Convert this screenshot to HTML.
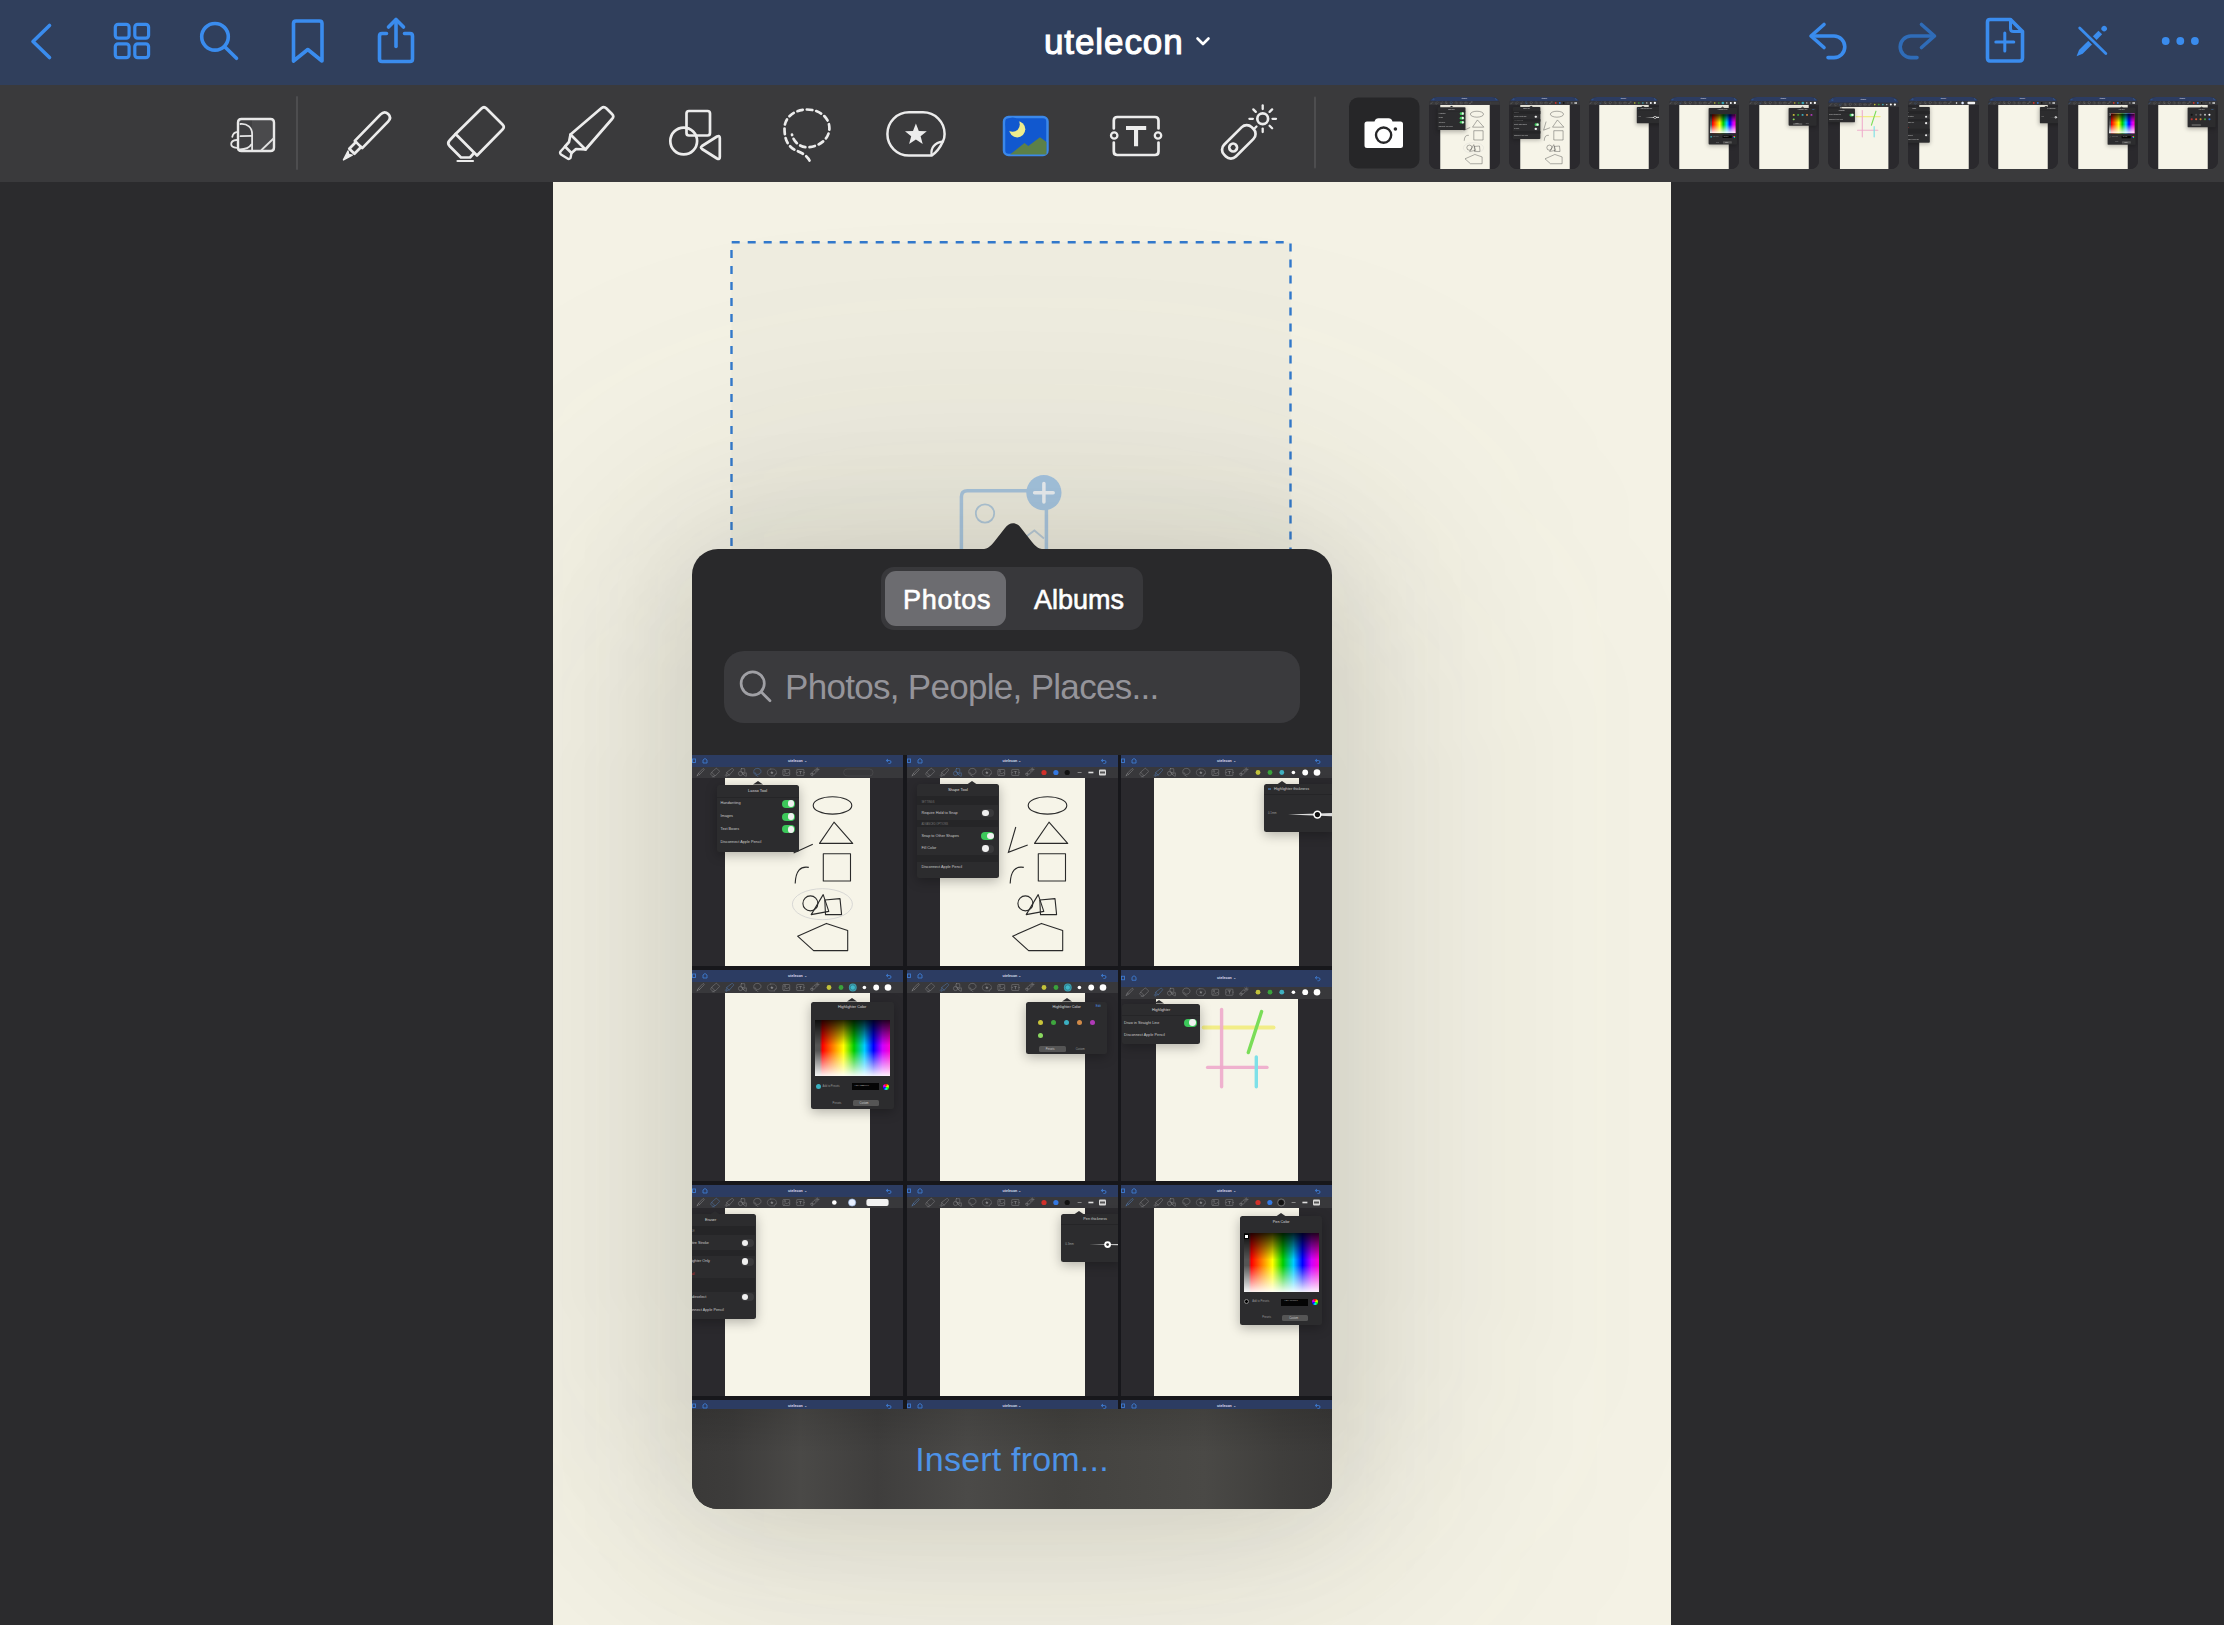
<!DOCTYPE html><html><head><meta charset="utf-8"><style>
*{box-sizing:border-box;margin:0;padding:0}
html,body{width:2224px;height:1625px;overflow:hidden;background:#2b2b2d;font-family:"Liberation Sans",sans-serif}
.a{position:absolute}
svg{position:absolute;overflow:visible}
#nav{left:0;top:0;width:2224px;height:85px;background:#303f5c}
#tb{left:0;top:85px;width:2224px;height:97px;background:#3a3a3c}
#paper{left:553px;top:182px;width:1118px;height:1443px;background:#f4f2e5;overflow:hidden}
#title{left:1044px;top:22px;font-size:35px;font-weight:normal;-webkit-text-stroke:1.1px #fff;color:#fff;letter-spacing:0.9px;line-height:40px}
#pop{left:692px;top:549px;width:640px;height:960px;background:#29292b;border-radius:26px;overflow:hidden}
#popsh{left:127px;top:368px;width:664px;height:970px;border-radius:60px;background:rgba(60,60,45,0.12);filter:blur(60px)}
#popsh2{left:37px;top:288px;width:844px;height:1120px;border-radius:200px;background:rgba(60,60,45,0.10);filter:blur(130px)}
#seg{left:189px;top:18px;width:262px;height:63px;background:#38383b;border-radius:13px}
#segsel{left:4px;top:4px;width:121px;height:55px;background:#6c6c70;border-radius:11px}
.segt{font-size:27px;font-weight:normal;-webkit-text-stroke:0.6px #fff;color:#fff;top:2px;line-height:63px}
#search{left:32px;top:102px;width:576px;height:72px;background:#3a3a3d;border-radius:20px}
#ph{left:61px;top:0;line-height:72px;font-size:35px;letter-spacing:-0.7px;color:#95949a}
#foot{left:0;top:860px;width:640px;height:100px;background:linear-gradient(to bottom,rgba(0,0,0,0.12),rgba(0,0,0,0) 45%),linear-gradient(to right,#3a3938 0%,#3d3c3b 6%,#4a4947 17%,#3f3e3d 29%,#4b4a48 43%,#43423f 58%,#4a4946 80%,#3f3e3c 92%,#3a3938 100%)}
#ins{left:0;width:640px;text-align:center;top:0;line-height:100px;font-size:34px;letter-spacing:0.2px;color:#4d93e8}
.th{overflow:hidden;position:absolute}
.tt{font-size:3.6px;font-weight:bold;color:#dde;white-space:nowrap;line-height:5px}
.tx{white-space:nowrap;line-height:1.2}
.pp{border-radius:2.5px;box-shadow:0 3px 12px rgba(0,0,0,0.28)}
</style></head><body><div id="nav" class="a"><div id="title" class="a">utelecon</div></div><svg class="a" width="2224" height="85" style="left:0;top:0" fill="none" stroke="#3a8cee" stroke-width="3.6" stroke-linecap="round" stroke-linejoin="round"><path d="M49.5,25.5 L33,41.5 L49.5,57.5"/><rect x="115.3" y="24.3" width="13.8" height="13.8" rx="2.8" stroke-width="3.2"/><rect x="134.8" y="24.3" width="13.8" height="13.8" rx="2.8" stroke-width="3.2"/><rect x="115.3" y="43.8" width="13.8" height="13.8" rx="2.8" stroke-width="3.2"/><rect x="134.8" y="43.8" width="13.8" height="13.8" rx="2.8" stroke-width="3.2"/><circle cx="215" cy="36.8" r="13.3"/><path d="M225,47 L236.5,58.3"/><path d="M296,21 L319.5,21 Q322,21 322,23.5 L322,61 L307.8,49.5 L293.5,61 L293.5,23.5 Q293.5,21 296,21 Z"/><path d="M386.5,33.5 L382,33.5 Q379.5,33.5 379.5,36 L379.5,59 Q379.5,61.5 382,61.5 L410,61.5 Q412.5,61.5 412.5,59 L412.5,36 Q412.5,33.5 410,33.5 L404.5,33.5"/><path d="M396,46.5 L396,20"/><path d="M388.5,27 L396,19.5 L403.5,27"/><path d="M1197.5,38.5 L1203,44 L1208.5,38.5" stroke="#fff" stroke-width="2.6"/><path d="M1824,24.5 L1811,36 L1824,47.5"/><path d="M1812,36 L1834,36 A10.8,10.8 0 0 1 1834,57.6 L1828,57.6"/><g stroke="#2f6cb8"><path d="M1921.5,24.5 L1934.5,36 L1921.5,47.5"/><path d="M1933.5,36 L1911,36 A10.8,10.8 0 0 0 1911,57.6 L1917,57.6"/></g><path d="M1990,19.5 L2010.5,19.5 L2022.5,31.5 L2022.5,58 Q2022.5,61 2019.5,61 L1990,61 Q1987.5,61 1987.5,58 L1987.5,22 Q1987.5,19.5 1990,19.5 Z"/><path d="M2010.5,19.5 L2010.5,28.5 Q2010.5,31.5 2013.5,31.5 L2022.5,31.5" stroke-width="3"/><path d="M2004.8,33 L2004.8,51 M1995.8,42 L2013.8,42" stroke-width="3"/><g transform="translate(2076.6,56.2) rotate(-45)" fill="#3a8cee" stroke="none"><path d="M0,0 L6,-2.6 L19.5,-2.6 L19.5,2.6 L6,2.6 Z"/><rect x="22.5" y="-2.6" width="11" height="5.2"/><circle cx="39" cy="0" r="2.8"/></g><path d="M2079.7,27.9 L2105.8,53.5" stroke="#303f5c" stroke-width="6.5"/><path d="M2079.7,27.9 L2105.8,53.5" stroke-width="2.8"/><g fill="#3a8cee" stroke="none"><circle cx="2165.7" cy="41" r="3.9"/><circle cx="2180.3" cy="41" r="3.9"/><circle cx="2194.9" cy="41" r="3.9"/></g></svg><svg width="0" height="0" style="position:absolute"><defs><g id="ic_pen" fill="none" stroke-linecap="round" stroke-linejoin="round"><g transform="translate(358.5,144.5) rotate(-45.7)"><path d="M0,-5.2 L37,-5.2 Q42.5,-5.2 42.5,0 Q42.5,5.2 37,5.2 L0,5.2 Z"/><path d="M0,-3.6 L-9.5,-3.6 L-9.5,3.6 L0,3.6"/><path d="M-12,-3 L-21.5,0 L-12,3 L-14,0 Z" fill="currentColor" stroke-width="1.5"/></g></g><g id="ic_eraser" fill="none" stroke-linecap="round" stroke-linejoin="round"><path d="M481.5,108.5 Q484,106 486.5,108.5 L502.5,124.5 Q505,127 502.5,129.5 L477,155.5 L455.6,134 Z"/><path d="M455.6,134 L449.5,140.5 Q447,143 449.5,146 L461,157.5 L470,157.5 L474,153"/><path d="M457.5,161 L473,161" stroke-width="2.2"/></g><g id="ic_hl" fill="none" stroke-linecap="round" stroke-linejoin="round"><path d="M601.5,108 Q604,106 606.5,108.5 L612,114 Q614.5,116.5 612,119 L585.5,149.5 L570.5,134.5 Z"/><path d="M570.5,134.5 L569,142 L565,146.5 L571.5,153 L576,149 L585.5,149.5"/><path d="M565,146.5 L560.5,151.5 Q559.5,153 561,154.5 L567.5,158.5 Q569,159.5 570.5,158 L571.5,153" stroke-width="2.4"/></g><g id="ic_shapes" fill="none" stroke-linecap="round" stroke-linejoin="round"><rect x="686.5" y="111" width="23.5" height="24.5" rx="2.5"/><circle cx="683.7" cy="141" r="13.4"/><path d="M702,146 L717,136.5 Q719.8,135 719.8,138 L719.8,157 Q719.8,160 717,158.5 L702,149 Q700,147.5 702,146 Z"/></g><g id="ic_lasso" fill="none" stroke-linecap="round" stroke-linejoin="round"><path stroke-dasharray="5.5 4" d="M809.5,160.5 C807,155 800,152 795,150 C788,146 784.5,140 784.5,128.3 C784.5,117 795,109.5 806.9,109.5 C819,109.5 829.4,117 829.4,128.3 C829.4,139 819,147.2 806.9,147.2 C799,147.2 793.5,141 792,134.6"/></g><g id="ic_sticker" fill="none" stroke-linecap="round" stroke-linejoin="round"><path d="M909,112.3 L923,112.3 C935,112.3 944.6,122 944.6,134 C944.6,136.8 944,139.2 943,141.3 C940,148 936.5,152.5 931.5,155.6 L909,155.6 C897,155.6 887.4,146 887.4,134 C887.4,122 897,112.3 909,112.3 Z" stroke-width="2.5"/><path d="M931.5,155 C930.8,148 933.5,143 943,141.3" stroke-width="2.2"/><path d="M915.9,123.6 L918.8,131 L926.8,131.3 L920.6,136.3 L922.7,144 L915.9,139.6 L909.1,144 L911.2,136.3 L905,131.3 L913,131 Z" fill="currentColor" stroke="none"/></g><g id="ic_imageg" fill="none" stroke-linecap="round" stroke-linejoin="round"><rect x="1004" y="117" width="43.5" height="38" rx="4.5" fill="#1158cf" stroke="#3b88ea" stroke-width="2.5"/><circle cx="1017.2" cy="129.3" r="8.1" fill="#eeec8c" stroke="none"/><circle cx="1012.6" cy="124.6" r="7.2" fill="#1158cf" stroke="none"/><path d="M1010,154.5 L1024.5,143 L1028.3,146 L1040,137.3 L1046.5,142 L1046.5,154.5 Z" fill="#5c8048" stroke="none"/></g><g id="ic_text" fill="none" stroke-linecap="round" stroke-linejoin="round"><path d="M1113.8,128.5 L1113.8,120.5 Q1113.8,117 1117.3,117 L1155,117 Q1158.5,117 1158.5,120.5 L1158.5,128.5 M1113.8,142.5 L1113.8,151.5 Q1113.8,155 1117.3,155 L1155,155 Q1158.5,155 1158.5,151.5 L1158.5,142.5"/><circle cx="1114.2" cy="135.5" r="3.2" stroke-width="2.3"/><circle cx="1158" cy="135.5" r="3.2" stroke-width="2.3"/><path d="M1126,126 L1146.2,126 L1146.2,130 L1138.1,130 L1138.1,146.3 L1134,146.3 L1134,130 L1126,130 Z" fill="currentColor" stroke="none"/></g><g id="ic_laser" fill="none" stroke-linecap="round" stroke-linejoin="round"><g transform="translate(1238.8,141.8) rotate(-45)"><rect x="-19.5" y="-8.3" width="39" height="16.6" rx="7"/><circle cx="-8" cy="0" r="3.9"/></g><circle cx="1262.7" cy="118.8" r="5.4"/><path d="M1272.5,118.8 L1276.0,118.8" stroke-width="2.3"/><path d="M1269.6,125.7 L1272.1,128.2" stroke-width="2.3"/><path d="M1262.7,128.6 L1262.7,132.1" stroke-width="2.3"/><path d="M1252.9,118.8 L1249.4,118.8" stroke-width="2.3"/><path d="M1255.8,111.9 L1253.3,109.4" stroke-width="2.3"/><path d="M1262.7,109.0 L1262.7,105.5" stroke-width="2.3"/><path d="M1269.6,111.9 L1272.1,109.4" stroke-width="2.3"/><path d="M1254.5,128.5 L1256.5,126.5" stroke-width="2.3"/></g></defs></svg><div id="tb" class="a"></div><svg class="a" width="2224" height="97" style="left:0;top:85px;color:#ececec" fill="none" stroke="#ececec" stroke-width="2.7" stroke-linecap="round" stroke-linejoin="round"><g transform="translate(0,-85)"><path d="M258,119 L270.5,119 Q274,119 274,122.5 L274,147.5 Q274,151 270.5,151 L241.5,151 Q238,151 238,147.5 L238,122.5 Q238,119 241.5,119 Z" fill="#4a4a4c" stroke="none"/><path d="M239,120 L252,120 L252,150 L239,150 Z" fill="#3f3f41" stroke="none"/><g stroke="#e6e6e6" stroke-width="1.8"><path d="M240.5,124 C247.5,123.5 252.1,127.5 252.1,134 L252.1,150.5"/><path d="M240.5,136.2 L251.5,135.8"/><path d="M251.3,144.5 C249.5,147.5 246,149.3 240,149.3"/><path d="M236.6,140 C233,140.3 231.2,142 231.2,144 C231.2,146 233,147.6 236.6,147.8"/><path d="M232.3,136.8 C233,134 234.6,132.5 236.6,132.2"/></g><path d="M258,119 L270.5,119 Q274,119 274,122.5 L274,147.5 Q274,151 270.5,151 L241.5,151 Q238,151 238,147.5 L238,122.5 Q238,119 241.5,119 Z" stroke="#e8e8e8" stroke-width="2.4"/><path d="M261.5,150 L273.5,138.5" stroke="#e0e0e0" stroke-width="1.8"/><path d="M297,97 L297,169" stroke="#4d4d4f" stroke-width="2"/><path d="M1315,97.5 L1315,167.5" stroke="#4d4d4f" stroke-width="2"/><use href="#ic_pen"/><use href="#ic_eraser"/><use href="#ic_hl"/><use href="#ic_shapes"/><use href="#ic_lasso"/><use href="#ic_sticker"/><use href="#ic_imageg"/><use href="#ic_text"/><use href="#ic_laser"/><rect x="1349" y="97.5" width="70.5" height="71" rx="9" fill="#262628" stroke="none"/><path d="M1367,121.5 L1374.5,121.5 Q1375.5,118.3 1378.5,118.3 L1388.5,118.3 Q1391.5,118.3 1392.5,121.5 L1400.5,121.5 Q1403,121.5 1403,124 L1403,145.5 Q1403,148 1400.5,148 L1367,148 Q1364.5,148 1364.5,145.5 L1364.5,124 Q1364.5,121.5 1367,121.5 Z" fill="#fff" stroke="none"/><circle cx="1383.6" cy="135.1" r="7.6" stroke="#262628" stroke-width="2.4"/><circle cx="1395.4" cy="129" r="1.8" fill="#262628" stroke="none"/></g></svg><div class="th" style="left:1429.3px;top:97px;width:70.5px;height:72px;border-radius:8px;background:#2a292d"><div class="a" style="left:-0.5px;top:0;width:211px;height:212px;transform:scale(0.3412);transform-origin:0 0"><div class="a" style="left:0;top:0;width:211px;height:211px;background:#2a292d"></div><div class="a" style="left:33px;top:23.4px;width:145.4px;height:187.6px;background:#f6f4e8"></div><div class="a" style="left:0;top:0;width:211px;height:12px;background:#2c3c62"></div><div class="a" style="left:0;top:12px;width:211px;height:11.4px;background:#38383b"></div><div class="a tt" style="left:96px;top:3.5px">utelecon &#8964;</div><svg class="a" width="211" height="12" style="left:0;top:0" fill="none" stroke="#3d7ad0" stroke-width="0.9"><rect x="0.5" y="4.0" width="3" height="3.5"/><path d="M11,8.0 v-3 l2,-1.5 l2,1.5 v3 z"/><path d="M196,4.0 l-1.8,1.5 l1.8,1.5 M194.5,5.5 h3 a1.5,1.5 0 0 1 0,3 h-1"/></svg><svg class="a" width="211" height="30" style="left:0;top:0" fill="none"><g opacity="0.75"><use href="#ic_pen" stroke="#a0a0a2" style="color:#a0a0a2" stroke-width="3.2" transform="translate(8.7,17.5) scale(0.16) translate(-368,-137)"/><use href="#ic_eraser" stroke="#a0a0a2" style="color:#a0a0a2" stroke-width="3.2" transform="translate(23.1,17.5) scale(0.16) translate(-476,-134)"/><use href="#ic_hl" stroke="#a0a0a2" style="color:#a0a0a2" stroke-width="3.2" transform="translate(37.5,17.5) scale(0.16) translate(-587,-133)"/><use href="#ic_shapes" stroke="#a0a0a2" style="color:#a0a0a2" stroke-width="3.2" transform="translate(51.5,17.5) scale(0.16) translate(-702,-135)"/><use href="#ic_lasso" stroke="#5a90d8" style="color:#5a90d8" stroke-width="3.2" transform="translate(65.4,17.5) scale(0.16) translate(-807,-135)"/><use href="#ic_sticker" stroke="#a0a0a2" style="color:#a0a0a2" stroke-width="3.2" transform="translate(79.9,17.5) scale(0.16) translate(-916,-134)"/><g transform="translate(94.3,17.5)" fill="none" stroke="#a0a0a2" stroke-width="0.55"><rect x="-3.4" y="-3" width="6.8" height="6" rx="0.8"/><path d="M-2.8,2.6 L-0.5,0.5 L0.6,1.4 L1.9,0 L3.2,1.2"/><circle cx="-1.4" cy="-1.2" r="0.8"/></g><use href="#ic_text" stroke="#a0a0a2" style="color:#a0a0a2" stroke-width="3.2" transform="translate(108.3,17.5) scale(0.16) translate(-1136,-136)"/><use href="#ic_laser" stroke="#a0a0a2" style="color:#a0a0a2" stroke-width="3.2" transform="translate(123.2,17.5) scale(0.16) translate(-1250,-138)"/></g><rect x="151.6" y="14" width="29.4" height="7" rx="3.5" stroke="#4a4a4c" stroke-width="0.8" fill="none"/></svg><svg class="a" width="211" height="212" style="left:0;top:0" fill="none" stroke="#2a2a2a" stroke-width="1.1" stroke-linejoin="round"><ellipse cx="140.5" cy="50.4" rx="19.3" ry="8.7"/><path d="M142,67.2 L127.5,88.4 L160.7,88.4 Z"/><rect x="131.3" y="98.8" width="27.2" height="27.2"/><path d="M116.8,112.4 Q104,110 103.2,128.4"/><circle cx="118.4" cy="148.4" r="7.5"/><path d="M131.2,139.6 L119.2,159.6 L136.8,156.4 Z"/><path d="M132.8,145 L148,143.6 L149.6,159.6 L133.5,159.6 Z"/><path d="M105.6,181.2 L134.4,168.4 L155.7,175.6 L155.7,195.6 L121.6,195.6 Z"/></svg><svg class="a" width="211" height="212" style="left:0;top:0" fill="none"><ellipse cx="130.4" cy="149.2" rx="30" ry="15.5" stroke="#cfcfcf" stroke-width="0.8"/><path d="M120.8,89.2 L101.6,98" stroke="#2a2a2a" stroke-width="1.1"/></svg><div class="a pp" style="left:24.5px;top:29.7px;width:82.3px;height:67px;background:#2c2c2e"><div class="a tx" style="left:0px;top:4px;font-size:4px;color:#ddd;width:82px;text-align:center">Lasso Tool</div><div class="a" style="left:0;top:12px;width:82px;height:1px;background:#252527"></div><div class="a tx" style="left:4px;top:16.5px;font-size:3.8px;color:#c8c8c8;">Handwriting</div><div class="a" style="left:65.5px;top:15px;width:13px;height:8px;border-radius:4px;background:#3cc85a"></div><div class="a" style="left:71.0px;top:15.6px;width:6.8px;height:6.8px;border-radius:50%;background:#f0f0f0"></div><div class="a tx" style="left:4px;top:29.5px;font-size:3.8px;color:#c8c8c8;">Images</div><div class="a" style="left:65.5px;top:28px;width:13px;height:8px;border-radius:4px;background:#3cc85a"></div><div class="a" style="left:71.0px;top:28.6px;width:6.8px;height:6.8px;border-radius:50%;background:#f0f0f0"></div><div class="a tx" style="left:4px;top:42px;font-size:3.8px;color:#c8c8c8;">Text Boxes</div><div class="a" style="left:65.5px;top:40.5px;width:13px;height:8px;border-radius:4px;background:#3cc85a"></div><div class="a" style="left:71.0px;top:41.1px;width:6.8px;height:6.8px;border-radius:50%;background:#f0f0f0"></div><div class="a tx" style="left:4px;top:55px;font-size:3.8px;color:#c8c8c8;">Disconnect Apple Pencil</div></div><svg class="a" width="10" height="5" style="left:60.900000000000006px;top:26.3px"><path d="M0,3.5 L5,0 L10,3.5 Z" fill="#2c2c2e"/></svg></div></div><div class="th" style="left:1509.1px;top:97px;width:70.5px;height:72px;border-radius:8px;background:#2a292d"><div class="a" style="left:-0.5px;top:0;width:211px;height:212px;transform:scale(0.3412);transform-origin:0 0"><div class="a" style="left:0;top:0;width:211px;height:211px;background:#2a292d"></div><div class="a" style="left:33px;top:23.4px;width:145.4px;height:187.6px;background:#f6f4e8"></div><div class="a" style="left:0;top:0;width:211px;height:12px;background:#2c3c62"></div><div class="a" style="left:0;top:12px;width:211px;height:11.4px;background:#38383b"></div><div class="a tt" style="left:96px;top:3.5px">utelecon &#8964;</div><svg class="a" width="211" height="12" style="left:0;top:0" fill="none" stroke="#3d7ad0" stroke-width="0.9"><rect x="0.5" y="4.0" width="3" height="3.5"/><path d="M11,8.0 v-3 l2,-1.5 l2,1.5 v3 z"/><path d="M196,4.0 l-1.8,1.5 l1.8,1.5 M194.5,5.5 h3 a1.5,1.5 0 0 1 0,3 h-1"/></svg><svg class="a" width="211" height="30" style="left:0;top:0" fill="none"><g opacity="0.75"><use href="#ic_pen" stroke="#a0a0a2" style="color:#a0a0a2" stroke-width="3.2" transform="translate(8.7,17.5) scale(0.16) translate(-368,-137)"/><use href="#ic_eraser" stroke="#a0a0a2" style="color:#a0a0a2" stroke-width="3.2" transform="translate(23.1,17.5) scale(0.16) translate(-476,-134)"/><use href="#ic_hl" stroke="#a0a0a2" style="color:#a0a0a2" stroke-width="3.2" transform="translate(37.5,17.5) scale(0.16) translate(-587,-133)"/><use href="#ic_shapes" stroke="#5a90d8" style="color:#5a90d8" stroke-width="3.2" transform="translate(51.5,17.5) scale(0.16) translate(-702,-135)"/><use href="#ic_lasso" stroke="#a0a0a2" style="color:#a0a0a2" stroke-width="3.2" transform="translate(65.4,17.5) scale(0.16) translate(-807,-135)"/><use href="#ic_sticker" stroke="#a0a0a2" style="color:#a0a0a2" stroke-width="3.2" transform="translate(79.9,17.5) scale(0.16) translate(-916,-134)"/><g transform="translate(94.3,17.5)" fill="none" stroke="#a0a0a2" stroke-width="0.55"><rect x="-3.4" y="-3" width="6.8" height="6" rx="0.8"/><path d="M-2.8,2.6 L-0.5,0.5 L0.6,1.4 L1.9,0 L3.2,1.2"/><circle cx="-1.4" cy="-1.2" r="0.8"/></g><use href="#ic_text" stroke="#a0a0a2" style="color:#a0a0a2" stroke-width="3.2" transform="translate(108.3,17.5) scale(0.16) translate(-1136,-136)"/><use href="#ic_laser" stroke="#a0a0a2" style="color:#a0a0a2" stroke-width="3.2" transform="translate(123.2,17.5) scale(0.16) translate(-1250,-138)"/></g><circle cx="137" cy="17.5" r="2.6" fill="#d0302a"/><circle cx="148.9" cy="17.5" r="2.6" fill="#3478e0"/><circle cx="160.2" cy="17.5" r="2.6" fill="#111"/><path d="M170.6,17.5 h4" stroke="#999" stroke-width="0.8"/><path d="M181.4,17.5 h5" stroke="#ddd" stroke-width="1.6"/><rect x="192" y="14.5" width="7" height="6" rx="1" fill="#d8d8d8"/><rect x="193" y="16.5" width="5" height="2" fill="#555"/></svg><svg class="a" width="211" height="212" style="left:0;top:0" fill="none" stroke="#2a2a2a" stroke-width="1.1" stroke-linejoin="round"><ellipse cx="140.5" cy="50.4" rx="19.3" ry="8.7"/><path d="M142,67.2 L127.5,88.4 L160.7,88.4 Z"/><rect x="131.3" y="98.8" width="27.2" height="27.2"/><path d="M116.8,112.4 Q104,110 103.2,128.4"/><circle cx="118.4" cy="148.4" r="7.5"/><path d="M131.2,139.6 L119.2,159.6 L136.8,156.4 Z"/><path d="M132.8,145 L148,143.6 L149.6,159.6 L133.5,159.6 Z"/><path d="M105.6,181.2 L134.4,168.4 L155.7,175.6 L155.7,195.6 L121.6,195.6 Z"/></svg><svg class="a" width="211" height="212" style="left:0;top:0" fill="none"><path d="M108.8,72 L101.4,97.3 L120.7,89.9" stroke="#2a2a2a" stroke-width="1.1"/></svg><div class="a pp" style="left:10.9px;top:29px;width:81.6px;height:93.5px;background:#2c2c2e"><div class="a tx" style="left:0px;top:4px;font-size:4px;color:#ddd;width:81px;text-align:center">Shape Tool</div><div class="a" style="left:0;top:12px;width:81px;height:9px;background:#252527"></div><div class="a tx" style="left:4px;top:16.5px;font-size:2.6px;color:#777;">SETTINGS</div><div class="a tx" style="left:4px;top:26.5px;font-size:3.8px;color:#c8c8c8;">Require Hold to Snap</div><div class="a" style="left:64px;top:25px;width:13px;height:8px;border-radius:4px;background:#3a3a3c"></div><div class="a" style="left:64.6px;top:25.6px;width:6.8px;height:6.8px;border-radius:50%;background:#f0f0f0"></div><div class="a" style="left:0;top:36px;width:81px;height:7px;background:#252527"></div><div class="a tx" style="left:4px;top:39px;font-size:2.6px;color:#777;">ADVANCED OPTIONS</div><div class="a tx" style="left:4px;top:49.5px;font-size:3.8px;color:#c8c8c8;">Snap to Other Shapes</div><div class="a" style="left:64px;top:48px;width:13px;height:8px;border-radius:4px;background:#3cc85a"></div><div class="a" style="left:69.5px;top:48.6px;width:6.8px;height:6.8px;border-radius:50%;background:#f0f0f0"></div><div class="a tx" style="left:4px;top:62px;font-size:3.8px;color:#c8c8c8;">Fill Color</div><div class="a" style="left:64px;top:60.5px;width:13px;height:8px;border-radius:4px;background:#3a3a3c"></div><div class="a" style="left:64.6px;top:61.1px;width:6.8px;height:6.8px;border-radius:50%;background:#f0f0f0"></div><div class="a" style="left:0;top:71px;width:81px;height:7px;background:#252527"></div><div class="a tx" style="left:4px;top:81px;font-size:3.8px;color:#c8c8c8;">Disconnect Apple Pencil</div></div><svg class="a" width="10" height="5" style="left:60.400000000000006px;top:25.6px"><path d="M0,3.5 L5,0 L10,3.5 Z" fill="#2c2c2e"/></svg></div></div><div class="th" style="left:1588.9px;top:97px;width:70.5px;height:72px;border-radius:8px;background:#2a292d"><div class="a" style="left:-0.5px;top:0;width:211px;height:212px;transform:scale(0.3412);transform-origin:0 0"><div class="a" style="left:0;top:0;width:211px;height:211px;background:#2a292d"></div><div class="a" style="left:33px;top:23.4px;width:145.4px;height:187.6px;background:#f6f4e8"></div><div class="a" style="left:0;top:0;width:211px;height:12px;background:#2c3c62"></div><div class="a" style="left:0;top:12px;width:211px;height:11.4px;background:#38383b"></div><div class="a tt" style="left:96px;top:3.5px">utelecon &#8964;</div><svg class="a" width="211" height="12" style="left:0;top:0" fill="none" stroke="#3d7ad0" stroke-width="0.9"><rect x="0.5" y="4.0" width="3" height="3.5"/><path d="M11,8.0 v-3 l2,-1.5 l2,1.5 v3 z"/><path d="M196,4.0 l-1.8,1.5 l1.8,1.5 M194.5,5.5 h3 a1.5,1.5 0 0 1 0,3 h-1"/></svg><svg class="a" width="211" height="30" style="left:0;top:0" fill="none"><g opacity="0.75"><use href="#ic_pen" stroke="#a0a0a2" style="color:#a0a0a2" stroke-width="3.2" transform="translate(8.7,17.5) scale(0.16) translate(-368,-137)"/><use href="#ic_eraser" stroke="#a0a0a2" style="color:#a0a0a2" stroke-width="3.2" transform="translate(23.1,17.5) scale(0.16) translate(-476,-134)"/><use href="#ic_hl" stroke="#5a90d8" style="color:#5a90d8" stroke-width="3.2" transform="translate(37.5,17.5) scale(0.16) translate(-587,-133)"/><use href="#ic_shapes" stroke="#a0a0a2" style="color:#a0a0a2" stroke-width="3.2" transform="translate(51.5,17.5) scale(0.16) translate(-702,-135)"/><use href="#ic_lasso" stroke="#a0a0a2" style="color:#a0a0a2" stroke-width="3.2" transform="translate(65.4,17.5) scale(0.16) translate(-807,-135)"/><use href="#ic_sticker" stroke="#a0a0a2" style="color:#a0a0a2" stroke-width="3.2" transform="translate(79.9,17.5) scale(0.16) translate(-916,-134)"/><g transform="translate(94.3,17.5)" fill="none" stroke="#a0a0a2" stroke-width="0.55"><rect x="-3.4" y="-3" width="6.8" height="6" rx="0.8"/><path d="M-2.8,2.6 L-0.5,0.5 L0.6,1.4 L1.9,0 L3.2,1.2"/><circle cx="-1.4" cy="-1.2" r="0.8"/></g><use href="#ic_text" stroke="#a0a0a2" style="color:#a0a0a2" stroke-width="3.2" transform="translate(108.3,17.5) scale(0.16) translate(-1136,-136)"/><use href="#ic_laser" stroke="#a0a0a2" style="color:#a0a0a2" stroke-width="3.2" transform="translate(123.2,17.5) scale(0.16) translate(-1250,-138)"/></g><circle cx="137" cy="17.5" r="2.4" fill="#c2c23a"/><circle cx="149" cy="17.5" r="2.4" fill="#3aa23c"/><circle cx="160.8" cy="17.5" r="2.4" fill="#3fb0c0"/><circle cx="172.4" cy="17.5" r="1.8" fill="#fff"/><circle cx="184.2" cy="17.5" r="2.9" fill="#fff"/><circle cx="196" cy="17.5" r="3.3" fill="#fff"/></svg><div class="a pp" style="left:143px;top:29px;width:70px;height:47.5px;background:#2c2c2e"><div class="a tx" style="left:10px;top:3px;font-size:3.8px;color:#ccc;">Highlighter thickness</div><div class="a" style="left:0;top:10px;width:80px;height:1px;background:#252527"></div><div class="a tx" style="left:4px;top:28px;font-size:2.8px;color:#999;">0.1mm</div><svg class="a" width="80" height="40" style="left:0;top:0"><path d="M24,30.6 L68,29 L68,32.2 Z" fill="#ddd"/><circle cx="53.4" cy="30.6" r="4.2" fill="#fff"/><circle cx="53.4" cy="30.6" r="2.6" fill="#111"/><path d="M4,5 h3" stroke="#4d8fe0" stroke-width="1"/></svg></div><svg class="a" width="10" height="5" style="left:155.8px;top:25.6px"><path d="M0,3.5 L5,0 L10,3.5 Z" fill="#2c2c2e"/></svg></div></div><div class="th" style="left:1668.7px;top:97px;width:70.5px;height:72px;border-radius:8px;background:#2a292d"><div class="a" style="left:-0.5px;top:0;width:211px;height:212px;transform:scale(0.3412);transform-origin:0 0"><div class="a" style="left:0;top:0;width:211px;height:211px;background:#2a292d"></div><div class="a" style="left:33px;top:23.4px;width:145.4px;height:187.6px;background:#f6f4e8"></div><div class="a" style="left:0;top:0;width:211px;height:12px;background:#2c3c62"></div><div class="a" style="left:0;top:12px;width:211px;height:11.4px;background:#38383b"></div><div class="a tt" style="left:96px;top:3.5px">utelecon &#8964;</div><svg class="a" width="211" height="12" style="left:0;top:0" fill="none" stroke="#3d7ad0" stroke-width="0.9"><rect x="0.5" y="4.0" width="3" height="3.5"/><path d="M11,8.0 v-3 l2,-1.5 l2,1.5 v3 z"/><path d="M196,4.0 l-1.8,1.5 l1.8,1.5 M194.5,5.5 h3 a1.5,1.5 0 0 1 0,3 h-1"/></svg><svg class="a" width="211" height="30" style="left:0;top:0" fill="none"><g opacity="0.75"><use href="#ic_pen" stroke="#a0a0a2" style="color:#a0a0a2" stroke-width="3.2" transform="translate(8.7,17.5) scale(0.16) translate(-368,-137)"/><use href="#ic_eraser" stroke="#a0a0a2" style="color:#a0a0a2" stroke-width="3.2" transform="translate(23.1,17.5) scale(0.16) translate(-476,-134)"/><use href="#ic_hl" stroke="#5a90d8" style="color:#5a90d8" stroke-width="3.2" transform="translate(37.5,17.5) scale(0.16) translate(-587,-133)"/><use href="#ic_shapes" stroke="#a0a0a2" style="color:#a0a0a2" stroke-width="3.2" transform="translate(51.5,17.5) scale(0.16) translate(-702,-135)"/><use href="#ic_lasso" stroke="#a0a0a2" style="color:#a0a0a2" stroke-width="3.2" transform="translate(65.4,17.5) scale(0.16) translate(-807,-135)"/><use href="#ic_sticker" stroke="#a0a0a2" style="color:#a0a0a2" stroke-width="3.2" transform="translate(79.9,17.5) scale(0.16) translate(-916,-134)"/><g transform="translate(94.3,17.5)" fill="none" stroke="#a0a0a2" stroke-width="0.55"><rect x="-3.4" y="-3" width="6.8" height="6" rx="0.8"/><path d="M-2.8,2.6 L-0.5,0.5 L0.6,1.4 L1.9,0 L3.2,1.2"/><circle cx="-1.4" cy="-1.2" r="0.8"/></g><use href="#ic_text" stroke="#a0a0a2" style="color:#a0a0a2" stroke-width="3.2" transform="translate(108.3,17.5) scale(0.16) translate(-1136,-136)"/><use href="#ic_laser" stroke="#a0a0a2" style="color:#a0a0a2" stroke-width="3.2" transform="translate(123.2,17.5) scale(0.16) translate(-1250,-138)"/></g><circle cx="137" cy="17.5" r="2.4" fill="#c2c23a"/><circle cx="149" cy="17.5" r="2.4" fill="#3aa23c"/><circle cx="160.8" cy="17.5" r="3.9" fill="#3a9fb0"/><circle cx="160.8" cy="17.5" r="2.6" fill="#3fb8c8" stroke="#2a6a78" stroke-width="0.6"/><circle cx="172.4" cy="17.5" r="1.8" fill="#fff"/><circle cx="184.2" cy="17.5" r="2.9" fill="#fff"/><circle cx="196" cy="17.5" r="3.3" fill="#fff"/></svg><div class="a pp" style="left:118.6px;top:31.5px;width:83px;height:107.5px;background:#2c2c2e"><div class="a tx" style="left:0px;top:3.5px;font-size:3.8px;color:#ddd;width:83px;text-align:center">Highlighter Color</div><div class="a" style="left:4.4px;top:18.5px;width:74.8px;height:56.3px;background:linear-gradient(to bottom,rgba(0,0,0,0.85),rgba(0,0,0,0) 45%,rgba(255,255,255,0) 55%,rgba(255,255,255,0.95)),linear-gradient(to right,#555 0,#555 6%,#f00 10%,#f80 25%,#ff0 38%,#0c0 52%,#0cf 66%,#00f 78%,#c0f 90%,#f0c 100%)"></div><div class="a" style="left:5px;top:82px;width:5px;height:5px;border-radius:50%;background:#38b0c0"></div><div class="a tx" style="left:12px;top:83px;font-size:2.6px;color:#999;">Add to Presets</div><div class="a" style="left:41.4px;top:81.5px;width:26.8px;height:7px;background:#050505"></div><div class="a tx" style="left:44px;top:83px;font-size:2.4px;color:#aaa;">HEX 5BDFFF</div><div class="a" style="left:72px;top:82px;width:6px;height:6px;border-radius:50%;background:conic-gradient(#f00,#ff0,#0f0,#0ff,#00f,#f0f,#f00)"></div><div class="a tx" style="left:22px;top:100px;font-size:2.6px;color:#999;">Presets</div><div class="a" style="left:42px;top:98.5px;width:26px;height:6px;border-radius:1.5px;background:#555"></div><div class="a tx" style="left:49px;top:100px;font-size:2.6px;color:#ccc;">Custom</div></div><svg class="a" width="10" height="5" style="left:155px;top:28.1px"><path d="M0,3.5 L5,0 L10,3.5 Z" fill="#2c2c2e"/></svg></div></div><div class="th" style="left:1748.5px;top:97px;width:70.5px;height:72px;border-radius:8px;background:#2a292d"><div class="a" style="left:-0.5px;top:0;width:211px;height:212px;transform:scale(0.3412);transform-origin:0 0"><div class="a" style="left:0;top:0;width:211px;height:211px;background:#2a292d"></div><div class="a" style="left:33px;top:23.4px;width:145.4px;height:187.6px;background:#f6f4e8"></div><div class="a" style="left:0;top:0;width:211px;height:12px;background:#2c3c62"></div><div class="a" style="left:0;top:12px;width:211px;height:11.4px;background:#38383b"></div><div class="a tt" style="left:96px;top:3.5px">utelecon &#8964;</div><svg class="a" width="211" height="12" style="left:0;top:0" fill="none" stroke="#3d7ad0" stroke-width="0.9"><rect x="0.5" y="4.0" width="3" height="3.5"/><path d="M11,8.0 v-3 l2,-1.5 l2,1.5 v3 z"/><path d="M196,4.0 l-1.8,1.5 l1.8,1.5 M194.5,5.5 h3 a1.5,1.5 0 0 1 0,3 h-1"/></svg><svg class="a" width="211" height="30" style="left:0;top:0" fill="none"><g opacity="0.75"><use href="#ic_pen" stroke="#a0a0a2" style="color:#a0a0a2" stroke-width="3.2" transform="translate(8.7,17.5) scale(0.16) translate(-368,-137)"/><use href="#ic_eraser" stroke="#a0a0a2" style="color:#a0a0a2" stroke-width="3.2" transform="translate(23.1,17.5) scale(0.16) translate(-476,-134)"/><use href="#ic_hl" stroke="#5a90d8" style="color:#5a90d8" stroke-width="3.2" transform="translate(37.5,17.5) scale(0.16) translate(-587,-133)"/><use href="#ic_shapes" stroke="#a0a0a2" style="color:#a0a0a2" stroke-width="3.2" transform="translate(51.5,17.5) scale(0.16) translate(-702,-135)"/><use href="#ic_lasso" stroke="#a0a0a2" style="color:#a0a0a2" stroke-width="3.2" transform="translate(65.4,17.5) scale(0.16) translate(-807,-135)"/><use href="#ic_sticker" stroke="#a0a0a2" style="color:#a0a0a2" stroke-width="3.2" transform="translate(79.9,17.5) scale(0.16) translate(-916,-134)"/><g transform="translate(94.3,17.5)" fill="none" stroke="#a0a0a2" stroke-width="0.55"><rect x="-3.4" y="-3" width="6.8" height="6" rx="0.8"/><path d="M-2.8,2.6 L-0.5,0.5 L0.6,1.4 L1.9,0 L3.2,1.2"/><circle cx="-1.4" cy="-1.2" r="0.8"/></g><use href="#ic_text" stroke="#a0a0a2" style="color:#a0a0a2" stroke-width="3.2" transform="translate(108.3,17.5) scale(0.16) translate(-1136,-136)"/><use href="#ic_laser" stroke="#a0a0a2" style="color:#a0a0a2" stroke-width="3.2" transform="translate(123.2,17.5) scale(0.16) translate(-1250,-138)"/></g><circle cx="137" cy="17.5" r="2.4" fill="#c2c23a"/><circle cx="149" cy="17.5" r="2.4" fill="#3aa23c"/><circle cx="160.8" cy="17.5" r="3.9" fill="#3a9fb0"/><circle cx="160.8" cy="17.5" r="2.6" fill="#3fb8c8" stroke="#2a6a78" stroke-width="0.6"/><circle cx="172.4" cy="17.5" r="1.8" fill="#fff"/><circle cx="184.2" cy="17.5" r="2.9" fill="#fff"/><circle cx="196" cy="17.5" r="3.3" fill="#fff"/></svg><div class="a pp" style="left:119.2px;top:31.5px;width:81.6px;height:52.5px;background:#2c2c2e"><div class="a tx" style="left:0px;top:3.5px;font-size:3.8px;color:#ddd;width:82px;text-align:center">Highlighter Color</div><div class="a tx" style="left:70px;top:3.5px;font-size:3px;color:#4d8fe0;">Edit</div><div class="a" style="left:12.0px;top:18.0px;width:5.6px;height:5.6px;border-radius:50%;background:#c8c43a"></div><div class="a" style="left:25.0px;top:18.0px;width:5.6px;height:5.6px;border-radius:50%;background:#3ea63e"></div><div class="a" style="left:38.0px;top:18.0px;width:5.6px;height:5.6px;border-radius:50%;background:#3bb0c2"></div><div class="a" style="left:51.0px;top:18.0px;width:5.6px;height:5.6px;border-radius:50%;background:#d08a48"></div><div class="a" style="left:64.0px;top:18.0px;width:5.6px;height:5.6px;border-radius:50%;background:#b03ab8"></div><div class="a" style="left:12px;top:31.4px;width:5.6px;height:5.6px;border-radius:50%;background:#8ad860"></div><div class="a" style="left:13.3px;top:44.8px;width:26.8px;height:5.5px;border-radius:1.5px;background:#555"></div><div class="a tx" style="left:20px;top:46px;font-size:2.6px;color:#ccc;">Presets</div><div class="a tx" style="left:50px;top:46px;font-size:2.6px;color:#999;">Custom</div></div><svg class="a" width="10" height="5" style="left:155px;top:28.1px"><path d="M0,3.5 L5,0 L10,3.5 Z" fill="#2c2c2e"/></svg></div></div><div class="th" style="left:1828.3px;top:97px;width:70.5px;height:72px;border-radius:8px;background:#2a292d"><div class="a" style="left:-0.5px;top:0;width:211px;height:212px;transform:scale(0.3412);transform-origin:0 0"><div class="a" style="left:0;top:0;width:211px;height:211px;background:#2a292d"></div><div class="a" style="left:34.7px;top:28.8px;width:142.10000000000002px;height:182.2px;background:#f6f4e8"></div><div class="a" style="left:0;top:0;width:211px;height:16.5px;background:#2c3c62"></div><div class="a" style="left:0;top:16.5px;width:211px;height:12.3px;background:#38383b"></div><div class="a tt" style="left:96px;top:5.75px">utelecon &#8964;</div><svg class="a" width="211" height="16.5" style="left:0;top:0" fill="none" stroke="#3d7ad0" stroke-width="0.9"><rect x="0.5" y="6.25" width="3" height="3.5"/><path d="M11,10.25 v-3 l2,-1.5 l2,1.5 v3 z"/><path d="M196,6.25 l-1.8,1.5 l1.8,1.5 M194.5,7.75 h3 a1.5,1.5 0 0 1 0,3 h-1"/></svg><svg class="a" width="211" height="30" style="left:0;top:0" fill="none"><g opacity="0.75"><use href="#ic_pen" stroke="#a0a0a2" style="color:#a0a0a2" stroke-width="3.2" transform="translate(8.7,22.2) scale(0.16) translate(-368,-137)"/><use href="#ic_eraser" stroke="#a0a0a2" style="color:#a0a0a2" stroke-width="3.2" transform="translate(23.1,22.2) scale(0.16) translate(-476,-134)"/><use href="#ic_hl" stroke="#5a90d8" style="color:#5a90d8" stroke-width="3.2" transform="translate(37.5,22.2) scale(0.16) translate(-587,-133)"/><use href="#ic_shapes" stroke="#a0a0a2" style="color:#a0a0a2" stroke-width="3.2" transform="translate(51.5,22.2) scale(0.16) translate(-702,-135)"/><use href="#ic_lasso" stroke="#a0a0a2" style="color:#a0a0a2" stroke-width="3.2" transform="translate(65.4,22.2) scale(0.16) translate(-807,-135)"/><use href="#ic_sticker" stroke="#a0a0a2" style="color:#a0a0a2" stroke-width="3.2" transform="translate(79.9,22.2) scale(0.16) translate(-916,-134)"/><g transform="translate(94.3,22.2)" fill="none" stroke="#a0a0a2" stroke-width="0.55"><rect x="-3.4" y="-3" width="6.8" height="6" rx="0.8"/><path d="M-2.8,2.6 L-0.5,0.5 L0.6,1.4 L1.9,0 L3.2,1.2"/><circle cx="-1.4" cy="-1.2" r="0.8"/></g><use href="#ic_text" stroke="#a0a0a2" style="color:#a0a0a2" stroke-width="3.2" transform="translate(108.3,22.2) scale(0.16) translate(-1136,-136)"/><use href="#ic_laser" stroke="#a0a0a2" style="color:#a0a0a2" stroke-width="3.2" transform="translate(123.2,22.2) scale(0.16) translate(-1250,-138)"/></g><circle cx="137" cy="22.2" r="2.4" fill="#c2c23a"/><circle cx="149" cy="22.2" r="2.4" fill="#3aa23c"/><circle cx="160.8" cy="22.2" r="2.4" fill="#3fb0c0"/><circle cx="172.4" cy="22.2" r="1.8" fill="#fff"/><circle cx="184.2" cy="22.2" r="2.9" fill="#fff"/><circle cx="196" cy="22.2" r="3.3" fill="#fff"/></svg><svg class="a" width="211" height="212" style="left:0;top:0" fill="none" stroke-linecap="round"><path d="M82.7,57.4 L152.5,57.4" stroke="#f2ec7c" stroke-width="4" opacity="0.9"/><path d="M100.6,39.5 L100.6,116.7" stroke="#eeaacb" stroke-width="3.4" opacity="0.9"/><path d="M140.6,41.6 L127.3,82.6" stroke="#7add58" stroke-width="3.4"/><path d="M86.6,97.4 L146,97.4" stroke="#eeaacb" stroke-width="3.4" opacity="0.9"/><path d="M135.3,87 L135.3,116.7" stroke="#7ee0e8" stroke-width="3.4"/></svg><div class="a pp" style="left:1.1px;top:33.6px;width:77.8px;height:40.7px;background:#2c2c2e"><div class="a tx" style="left:0px;top:4px;font-size:3.8px;color:#ddd;width:78px;text-align:center">Highlighter</div><div class="a" style="left:0;top:11px;width:78px;height:1px;background:#252527"></div><div class="a tx" style="left:2px;top:17px;font-size:3.8px;color:#c8c8c8;">Draw in Straight Line</div><div class="a" style="left:61.5px;top:15px;width:13px;height:8px;border-radius:4px;background:#3cc85a"></div><div class="a" style="left:67.0px;top:15.6px;width:6.8px;height:6.8px;border-radius:50%;background:#f0f0f0"></div><div class="a tx" style="left:2px;top:29.5px;font-size:3.8px;color:#c8c8c8;">Disconnect Apple Pencil</div></div><svg class="a" width="10" height="5" style="left:32.5px;top:30.200000000000003px"><path d="M0,3.5 L5,0 L10,3.5 Z" fill="#2c2c2e"/></svg></div></div><div class="th" style="left:1908.1px;top:97px;width:70.5px;height:72px;border-radius:8px;background:#2a292d"><div class="a" style="left:-0.5px;top:0;width:211px;height:212px;transform:scale(0.3412);transform-origin:0 0"><div class="a" style="left:0;top:0;width:211px;height:211px;background:#2a292d"></div><div class="a" style="left:33px;top:23.4px;width:145.4px;height:187.6px;background:#f6f4e8"></div><div class="a" style="left:0;top:0;width:211px;height:12px;background:#2c3c62"></div><div class="a" style="left:0;top:12px;width:211px;height:11.4px;background:#38383b"></div><div class="a tt" style="left:96px;top:3.5px">utelecon &#8964;</div><svg class="a" width="211" height="12" style="left:0;top:0" fill="none" stroke="#3d7ad0" stroke-width="0.9"><rect x="0.5" y="4.0" width="3" height="3.5"/><path d="M11,8.0 v-3 l2,-1.5 l2,1.5 v3 z"/><path d="M196,4.0 l-1.8,1.5 l1.8,1.5 M194.5,5.5 h3 a1.5,1.5 0 0 1 0,3 h-1"/></svg><svg class="a" width="211" height="30" style="left:0;top:0" fill="none"><g opacity="0.75"><use href="#ic_pen" stroke="#a0a0a2" style="color:#a0a0a2" stroke-width="3.2" transform="translate(8.7,17.5) scale(0.16) translate(-368,-137)"/><use href="#ic_eraser" stroke="#5a90d8" style="color:#5a90d8" stroke-width="3.2" transform="translate(23.1,17.5) scale(0.16) translate(-476,-134)"/><use href="#ic_hl" stroke="#a0a0a2" style="color:#a0a0a2" stroke-width="3.2" transform="translate(37.5,17.5) scale(0.16) translate(-587,-133)"/><use href="#ic_shapes" stroke="#a0a0a2" style="color:#a0a0a2" stroke-width="3.2" transform="translate(51.5,17.5) scale(0.16) translate(-702,-135)"/><use href="#ic_lasso" stroke="#a0a0a2" style="color:#a0a0a2" stroke-width="3.2" transform="translate(65.4,17.5) scale(0.16) translate(-807,-135)"/><use href="#ic_sticker" stroke="#a0a0a2" style="color:#a0a0a2" stroke-width="3.2" transform="translate(79.9,17.5) scale(0.16) translate(-916,-134)"/><g transform="translate(94.3,17.5)" fill="none" stroke="#a0a0a2" stroke-width="0.55"><rect x="-3.4" y="-3" width="6.8" height="6" rx="0.8"/><path d="M-2.8,2.6 L-0.5,0.5 L0.6,1.4 L1.9,0 L3.2,1.2"/><circle cx="-1.4" cy="-1.2" r="0.8"/></g><use href="#ic_text" stroke="#a0a0a2" style="color:#a0a0a2" stroke-width="3.2" transform="translate(108.3,17.5) scale(0.16) translate(-1136,-136)"/><use href="#ic_laser" stroke="#a0a0a2" style="color:#a0a0a2" stroke-width="3.2" transform="translate(123.2,17.5) scale(0.16) translate(-1250,-138)"/></g><circle cx="142.3" cy="17.5" r="2.3" fill="#fff"/><circle cx="160.1" cy="17.5" r="3.6" fill="#e8f0ff" stroke="#9bb8e8" stroke-width="0.6"/><rect x="174.4" y="14" width="22.2" height="7" rx="2" fill="#f2f2f2"/></svg><div class="a pp" style="left:-1px;top:29px;width:64.7px;height:105.4px;background:#2c2c2e"><div class="a tx" style="left:14px;top:4px;font-size:3.8px;color:#ddd;">Eraser</div><div class="a" style="left:0;top:12px;width:64px;height:9px;background:#252527"></div><div class="a tx" style="left:-4px;top:16px;font-size:2.6px;color:#777;">MODE</div><div class="a tx" style="left:-4px;top:27px;font-size:3.8px;color:#c8c8c8;">Entire Stroke</div><div class="a" style="left:50px;top:25px;width:13px;height:8px;border-radius:4px;background:#3a3a3c"></div><div class="a" style="left:50.6px;top:25.6px;width:6.8px;height:6.8px;border-radius:50%;background:#f0f0f0"></div><div class="a" style="left:0;top:36px;width:64px;height:6px;background:#252527"></div><div class="a tx" style="left:-8px;top:45px;font-size:3.8px;color:#c8c8c8;">Highlighter Only</div><div class="a" style="left:50px;top:43.5px;width:13px;height:8px;border-radius:4px;background:#3a3a3c"></div><div class="a" style="left:50.6px;top:44.1px;width:6.8px;height:6.8px;border-radius:50%;background:#f0f0f0"></div><div class="a tx" style="left:-8px;top:58.5px;font-size:3px;color:#d03030;">Erase all</div><div class="a" style="left:0;top:64px;width:64px;height:14px;background:#262628"></div><div class="a tx" style="left:-8px;top:81px;font-size:3.8px;color:#c8c8c8;">Auto-deselect</div><div class="a" style="left:50px;top:79px;width:13px;height:8px;border-radius:4px;background:#3a3a3c"></div><div class="a" style="left:50.6px;top:79.6px;width:6.8px;height:6.8px;border-radius:50%;background:#f0f0f0"></div><div class="a tx" style="left:-8px;top:93.5px;font-size:3.8px;color:#c8c8c8;">Disconnect Apple Pencil</div></div><svg class="a" width="10" height="5" style="left:17.7px;top:25.6px"><path d="M0,3.5 L5,0 L10,3.5 Z" fill="#2c2c2e"/></svg></div></div><div class="th" style="left:1987.9px;top:97px;width:70.5px;height:72px;border-radius:8px;background:#2a292d"><div class="a" style="left:-0.5px;top:0;width:211px;height:212px;transform:scale(0.3412);transform-origin:0 0"><div class="a" style="left:0;top:0;width:211px;height:211px;background:#2a292d"></div><div class="a" style="left:33px;top:23.4px;width:145.4px;height:187.6px;background:#f6f4e8"></div><div class="a" style="left:0;top:0;width:211px;height:12px;background:#2c3c62"></div><div class="a" style="left:0;top:12px;width:211px;height:11.4px;background:#38383b"></div><div class="a tt" style="left:96px;top:3.5px">utelecon &#8964;</div><svg class="a" width="211" height="12" style="left:0;top:0" fill="none" stroke="#3d7ad0" stroke-width="0.9"><rect x="0.5" y="4.0" width="3" height="3.5"/><path d="M11,8.0 v-3 l2,-1.5 l2,1.5 v3 z"/><path d="M196,4.0 l-1.8,1.5 l1.8,1.5 M194.5,5.5 h3 a1.5,1.5 0 0 1 0,3 h-1"/></svg><svg class="a" width="211" height="30" style="left:0;top:0" fill="none"><g opacity="0.75"><use href="#ic_pen" stroke="#5a90d8" style="color:#5a90d8" stroke-width="3.2" transform="translate(8.7,17.5) scale(0.16) translate(-368,-137)"/><use href="#ic_eraser" stroke="#a0a0a2" style="color:#a0a0a2" stroke-width="3.2" transform="translate(23.1,17.5) scale(0.16) translate(-476,-134)"/><use href="#ic_hl" stroke="#a0a0a2" style="color:#a0a0a2" stroke-width="3.2" transform="translate(37.5,17.5) scale(0.16) translate(-587,-133)"/><use href="#ic_shapes" stroke="#a0a0a2" style="color:#a0a0a2" stroke-width="3.2" transform="translate(51.5,17.5) scale(0.16) translate(-702,-135)"/><use href="#ic_lasso" stroke="#a0a0a2" style="color:#a0a0a2" stroke-width="3.2" transform="translate(65.4,17.5) scale(0.16) translate(-807,-135)"/><use href="#ic_sticker" stroke="#a0a0a2" style="color:#a0a0a2" stroke-width="3.2" transform="translate(79.9,17.5) scale(0.16) translate(-916,-134)"/><g transform="translate(94.3,17.5)" fill="none" stroke="#a0a0a2" stroke-width="0.55"><rect x="-3.4" y="-3" width="6.8" height="6" rx="0.8"/><path d="M-2.8,2.6 L-0.5,0.5 L0.6,1.4 L1.9,0 L3.2,1.2"/><circle cx="-1.4" cy="-1.2" r="0.8"/></g><use href="#ic_text" stroke="#a0a0a2" style="color:#a0a0a2" stroke-width="3.2" transform="translate(108.3,17.5) scale(0.16) translate(-1136,-136)"/><use href="#ic_laser" stroke="#a0a0a2" style="color:#a0a0a2" stroke-width="3.2" transform="translate(123.2,17.5) scale(0.16) translate(-1250,-138)"/></g><circle cx="137" cy="17.5" r="2.6" fill="#d0302a"/><circle cx="148.9" cy="17.5" r="2.6" fill="#3478e0"/><circle cx="160.2" cy="17.5" r="2.6" fill="#111"/><path d="M170.6,17.5 h4" stroke="#999" stroke-width="0.8"/><path d="M181.4,17.5 h5" stroke="#ddd" stroke-width="1.6"/><rect x="192" y="14.5" width="7" height="6" rx="1" fill="#d8d8d8"/><rect x="193" y="16.5" width="5" height="2" fill="#555"/></svg><div class="a pp" style="left:154.8px;top:29px;width:60px;height:48.4px;background:#2c2c2e"><div class="a tx" style="left:22px;top:3px;font-size:3.8px;color:#ccc;">Pen thickness</div><div class="a" style="left:0;top:10px;width:60px;height:1px;background:#252527"></div><div class="a tx" style="left:4px;top:28.5px;font-size:2.8px;color:#999;">0.3mm</div><svg class="a" width="60" height="40" style="left:0;top:0"><path d="M28,30.6 L60,30 L60,31.2 Z" fill="#ccc"/><circle cx="46.6" cy="30.6" r="3.4" fill="#fff"/><circle cx="46.6" cy="30.6" r="1.4" fill="#333"/></svg></div><svg class="a" width="10" height="5" style="left:167.6px;top:25.6px"><path d="M0,3.5 L5,0 L10,3.5 Z" fill="#2c2c2e"/></svg></div></div><div class="th" style="left:2067.7px;top:97px;width:70.5px;height:72px;border-radius:8px;background:#2a292d"><div class="a" style="left:-0.5px;top:0;width:211px;height:212px;transform:scale(0.3412);transform-origin:0 0"><div class="a" style="left:0;top:0;width:211px;height:211px;background:#2a292d"></div><div class="a" style="left:33px;top:23.4px;width:145.4px;height:187.6px;background:#f6f4e8"></div><div class="a" style="left:0;top:0;width:211px;height:12px;background:#2c3c62"></div><div class="a" style="left:0;top:12px;width:211px;height:11.4px;background:#38383b"></div><div class="a tt" style="left:96px;top:3.5px">utelecon &#8964;</div><svg class="a" width="211" height="12" style="left:0;top:0" fill="none" stroke="#3d7ad0" stroke-width="0.9"><rect x="0.5" y="4.0" width="3" height="3.5"/><path d="M11,8.0 v-3 l2,-1.5 l2,1.5 v3 z"/><path d="M196,4.0 l-1.8,1.5 l1.8,1.5 M194.5,5.5 h3 a1.5,1.5 0 0 1 0,3 h-1"/></svg><svg class="a" width="211" height="30" style="left:0;top:0" fill="none"><g opacity="0.75"><use href="#ic_pen" stroke="#5a90d8" style="color:#5a90d8" stroke-width="3.2" transform="translate(8.7,17.5) scale(0.16) translate(-368,-137)"/><use href="#ic_eraser" stroke="#a0a0a2" style="color:#a0a0a2" stroke-width="3.2" transform="translate(23.1,17.5) scale(0.16) translate(-476,-134)"/><use href="#ic_hl" stroke="#a0a0a2" style="color:#a0a0a2" stroke-width="3.2" transform="translate(37.5,17.5) scale(0.16) translate(-587,-133)"/><use href="#ic_shapes" stroke="#a0a0a2" style="color:#a0a0a2" stroke-width="3.2" transform="translate(51.5,17.5) scale(0.16) translate(-702,-135)"/><use href="#ic_lasso" stroke="#a0a0a2" style="color:#a0a0a2" stroke-width="3.2" transform="translate(65.4,17.5) scale(0.16) translate(-807,-135)"/><use href="#ic_sticker" stroke="#a0a0a2" style="color:#a0a0a2" stroke-width="3.2" transform="translate(79.9,17.5) scale(0.16) translate(-916,-134)"/><g transform="translate(94.3,17.5)" fill="none" stroke="#a0a0a2" stroke-width="0.55"><rect x="-3.4" y="-3" width="6.8" height="6" rx="0.8"/><path d="M-2.8,2.6 L-0.5,0.5 L0.6,1.4 L1.9,0 L3.2,1.2"/><circle cx="-1.4" cy="-1.2" r="0.8"/></g><use href="#ic_text" stroke="#a0a0a2" style="color:#a0a0a2" stroke-width="3.2" transform="translate(108.3,17.5) scale(0.16) translate(-1136,-136)"/><use href="#ic_laser" stroke="#a0a0a2" style="color:#a0a0a2" stroke-width="3.2" transform="translate(123.2,17.5) scale(0.16) translate(-1250,-138)"/></g><circle cx="137" cy="17.5" r="2.6" fill="#d0302a"/><circle cx="148.9" cy="17.5" r="2.6" fill="#3478e0"/><circle cx="160.2" cy="17.5" r="3.6" fill="none" stroke="#777" stroke-width="0.8"/><circle cx="160.2" cy="17.5" r="2.6" fill="#111"/><path d="M170.6,17.5 h4" stroke="#999" stroke-width="0.8"/><path d="M181.4,17.5 h5" stroke="#ddd" stroke-width="1.6"/><rect x="192" y="14.5" width="7" height="6" rx="1" fill="#d8d8d8"/><rect x="193" y="16.5" width="5" height="2" fill="#555"/></svg><div class="a pp" style="left:119.2px;top:31.1px;width:82.2px;height:108.6px;background:#2c2c2e"><div class="a tx" style="left:0px;top:3.5px;font-size:3.8px;color:#ddd;width:82px;text-align:center">Pen Color</div><div class="a" style="left:3.6px;top:17.2px;width:75.1px;height:58.7px;background:linear-gradient(to bottom,rgba(0,0,0,0.85),rgba(0,0,0,0) 45%,rgba(255,255,255,0) 55%,rgba(255,255,255,0.95)),linear-gradient(to right,#555 0,#555 6%,#f00 10%,#f80 25%,#ff0 38%,#0c0 52%,#0cf 66%,#00f 78%,#c0f 90%,#f0c 100%)"></div><div class="a" style="left:4px;top:18px;width:5px;height:5px;background:#fff;border:1px solid #000"></div><div class="a" style="left:4px;top:83px;width:5px;height:5px;border-radius:50%;background:#000;border:0.5px solid #888"></div><div class="a tx" style="left:12px;top:84px;font-size:2.6px;color:#999;">Add to Presets</div><div class="a" style="left:41px;top:82.5px;width:26.8px;height:7px;background:#050505"></div><div class="a tx" style="left:44px;top:84px;font-size:2.4px;color:#aaa;">HEX 000000</div><div class="a" style="left:72px;top:83px;width:6px;height:6px;border-radius:50%;background:conic-gradient(#f00,#ff0,#0f0,#0ff,#00f,#f0f,#f00)"></div><div class="a tx" style="left:22px;top:100px;font-size:2.6px;color:#999;">Presets</div><div class="a" style="left:42px;top:99px;width:26px;height:6px;border-radius:1.5px;background:#555"></div><div class="a tx" style="left:49px;top:100.5px;font-size:2.6px;color:#ccc;">Custom</div></div><svg class="a" width="10" height="5" style="left:155.2px;top:27.700000000000003px"><path d="M0,3.5 L5,0 L10,3.5 Z" fill="#2c2c2e"/></svg></div></div><div class="th" style="left:2147.5px;top:97px;width:70.5px;height:72px;border-radius:8px;background:#2a292d"><div class="a" style="left:-0.5px;top:0;width:211px;height:212px;transform:scale(0.3412);transform-origin:0 0"><div class="a" style="left:0;top:0;width:211px;height:211px;background:#2a292d"></div><div class="a" style="left:33px;top:23.4px;width:145.4px;height:187.6px;background:#f6f4e8"></div><div class="a" style="left:0;top:0;width:211px;height:12px;background:#2c3c62"></div><div class="a" style="left:0;top:12px;width:211px;height:11.4px;background:#38383b"></div><div class="a tt" style="left:96px;top:3.5px">utelecon &#8964;</div><svg class="a" width="211" height="12" style="left:0;top:0" fill="none" stroke="#3d7ad0" stroke-width="0.9"><rect x="0.5" y="4.0" width="3" height="3.5"/><path d="M11,8.0 v-3 l2,-1.5 l2,1.5 v3 z"/><path d="M196,4.0 l-1.8,1.5 l1.8,1.5 M194.5,5.5 h3 a1.5,1.5 0 0 1 0,3 h-1"/></svg><svg class="a" width="211" height="30" style="left:0;top:0" fill="none"><g opacity="0.75"><use href="#ic_pen" stroke="#5a90d8" style="color:#5a90d8" stroke-width="3.2" transform="translate(8.7,17.5) scale(0.16) translate(-368,-137)"/><use href="#ic_eraser" stroke="#a0a0a2" style="color:#a0a0a2" stroke-width="3.2" transform="translate(23.1,17.5) scale(0.16) translate(-476,-134)"/><use href="#ic_hl" stroke="#a0a0a2" style="color:#a0a0a2" stroke-width="3.2" transform="translate(37.5,17.5) scale(0.16) translate(-587,-133)"/><use href="#ic_shapes" stroke="#a0a0a2" style="color:#a0a0a2" stroke-width="3.2" transform="translate(51.5,17.5) scale(0.16) translate(-702,-135)"/><use href="#ic_lasso" stroke="#a0a0a2" style="color:#a0a0a2" stroke-width="3.2" transform="translate(65.4,17.5) scale(0.16) translate(-807,-135)"/><use href="#ic_sticker" stroke="#a0a0a2" style="color:#a0a0a2" stroke-width="3.2" transform="translate(79.9,17.5) scale(0.16) translate(-916,-134)"/><g transform="translate(94.3,17.5)" fill="none" stroke="#a0a0a2" stroke-width="0.55"><rect x="-3.4" y="-3" width="6.8" height="6" rx="0.8"/><path d="M-2.8,2.6 L-0.5,0.5 L0.6,1.4 L1.9,0 L3.2,1.2"/><circle cx="-1.4" cy="-1.2" r="0.8"/></g><use href="#ic_text" stroke="#a0a0a2" style="color:#a0a0a2" stroke-width="3.2" transform="translate(108.3,17.5) scale(0.16) translate(-1136,-136)"/><use href="#ic_laser" stroke="#a0a0a2" style="color:#a0a0a2" stroke-width="3.2" transform="translate(123.2,17.5) scale(0.16) translate(-1250,-138)"/></g><circle cx="137" cy="17.5" r="2.6" fill="#d0302a"/><circle cx="148.9" cy="17.5" r="2.6" fill="#3478e0"/><circle cx="160.2" cy="17.5" r="3.6" fill="none" stroke="#777" stroke-width="0.8"/><circle cx="160.2" cy="17.5" r="2.6" fill="#111"/><path d="M170.6,17.5 h4" stroke="#999" stroke-width="0.8"/><path d="M181.4,17.5 h5" stroke="#ddd" stroke-width="1.6"/><rect x="192" y="14.5" width="7" height="6" rx="1" fill="#d8d8d8"/><rect x="193" y="16.5" width="5" height="2" fill="#555"/></svg><div class="a pp" style="left:119.2px;top:31.1px;width:82px;height:58px;background:#2c2c2e"><div class="a tx" style="left:0px;top:3.5px;font-size:3.8px;color:#ddd;width:82px;text-align:center">Pen Color</div><div class="a tx" style="left:70px;top:3.5px;font-size:3px;color:#4d8fe0;">Edit</div><div class="a" style="left:9.2px;top:18.2px;width:5.6px;height:5.6px;border-radius:50%;background:#111"></div><div class="a" style="left:22.2px;top:18.2px;width:5.6px;height:5.6px;border-radius:50%;background:#555"></div><div class="a" style="left:35.2px;top:18.2px;width:5.6px;height:5.6px;border-radius:50%;background:#888"></div><div class="a" style="left:48.2px;top:18.2px;width:5.6px;height:5.6px;border-radius:50%;background:#bbb"></div><div class="a" style="left:61.2px;top:18.2px;width:5.6px;height:5.6px;border-radius:50%;background:#fff"></div><div class="a" style="left:9.2px;top:31.2px;width:5.6px;height:5.6px;border-radius:50%;background:#c03030"></div><div class="a" style="left:22.2px;top:31.2px;width:5.6px;height:5.6px;border-radius:50%;background:#e06040"></div><div class="a" style="left:35.2px;top:31.2px;width:5.6px;height:5.6px;border-radius:50%;background:#d09030"></div><div class="a" style="left:48.2px;top:31.2px;width:5.6px;height:5.6px;border-radius:50%;background:#40a040"></div><div class="a" style="left:61.2px;top:31.2px;width:5.6px;height:5.6px;border-radius:50%;background:#3070d0"></div><div class="a" style="left:12px;top:48px;width:26.8px;height:5.5px;border-radius:1.5px;background:#555"></div></div><svg class="a" width="10" height="5" style="left:155.2px;top:27.700000000000003px"><path d="M0,3.5 L5,0 L10,3.5 Z" fill="#2c2c2e"/></svg></div></div><div id="paper" class="a"><svg class="a" width="1118" height="1443" style="left:0;top:0" fill="none"><rect x="178.5" y="60.2" width="559" height="320" fill="rgba(90,90,80,0.03)"/><path d="M178.5,367 L178.5,60.2 L737.5,60.2 L737.5,367" stroke="#3279cc" stroke-width="2.4" stroke-dasharray="8 8" stroke-dashoffset="-3"/><g stroke="#a9c6df" stroke-width="3.5" stroke-linecap="round"><path d="M408.4,380 L408.4,314.8 Q408.4,308.8 414.4,308.8 L475,308.8"/><path d="M493.4,328 L493.4,380"/></g><circle cx="432" cy="331.5" r="9.2" stroke="#b0c8da" stroke-width="1.8"/><path d="M474,354 L481.4,348.5 L491,356.5" stroke="#b8cad8" stroke-width="1.8"/><circle cx="490.9" cy="310.7" r="17.6" fill="#a6c6e2"/><path d="M490.9,301.5 L490.9,320 M481.6,310.7 L500.2,310.7" stroke="#eef3f6" stroke-width="3.5" stroke-linecap="round"/></svg><div id="popsh2" class="a"></div><div id="popsh" class="a"></div></div><svg class="a" width="80" height="40" style="left:972px;top:515px"><path transform="translate(-972,-515)" d="M979,549.5 C987,549.5 990,547 994,542 L1005,528 C1009.5,521.5 1016.5,521.5 1021,528 L1032,542 C1036,547 1039,549.5 1047,549.5 Z" fill="#29292b"/></svg><div id="pop" class="a"><div id="seg" class="a"><div id="segsel" class="a"></div><div class="a segt" style="left:22px;letter-spacing:0.7px">Photos</div><div class="a segt" style="left:153px">Albums</div></div><div id="search" class="a"><svg class="a" width="40" height="40" style="left:0;top:0" fill="none" stroke="#a0a0a5" stroke-width="2.7" stroke-linecap="round"><circle cx="28.7" cy="32.5" r="11.6"/><path d="M37.5,41.3 L46,49.7"/></svg><div id="ph" class="a">Photos, People, Places...</div></div><div class="a" style="left:0;top:206px;width:640px;height:654px;background:#17171b;overflow:hidden"><div class="th" style="left:0px;top:0px;width:211px;height:211px"><div class="a" style="left:0;top:0;width:211px;height:211px;background:#2a292d"></div><div class="a" style="left:33px;top:23.4px;width:145.4px;height:187.6px;background:#f6f4e8"></div><div class="a" style="left:0;top:0;width:211px;height:12px;background:#2c3c62"></div><div class="a" style="left:0;top:12px;width:211px;height:11.4px;background:#38383b"></div><div class="a tt" style="left:96px;top:3.5px">utelecon &#8964;</div><svg class="a" width="211" height="12" style="left:0;top:0" fill="none" stroke="#3d7ad0" stroke-width="0.9"><rect x="0.5" y="4.0" width="3" height="3.5"/><path d="M11,8.0 v-3 l2,-1.5 l2,1.5 v3 z"/><path d="M196,4.0 l-1.8,1.5 l1.8,1.5 M194.5,5.5 h3 a1.5,1.5 0 0 1 0,3 h-1"/></svg><svg class="a" width="211" height="30" style="left:0;top:0" fill="none"><g opacity="0.75"><use href="#ic_pen" stroke="#a0a0a2" style="color:#a0a0a2" stroke-width="3.2" transform="translate(8.7,17.5) scale(0.16) translate(-368,-137)"/><use href="#ic_eraser" stroke="#a0a0a2" style="color:#a0a0a2" stroke-width="3.2" transform="translate(23.1,17.5) scale(0.16) translate(-476,-134)"/><use href="#ic_hl" stroke="#a0a0a2" style="color:#a0a0a2" stroke-width="3.2" transform="translate(37.5,17.5) scale(0.16) translate(-587,-133)"/><use href="#ic_shapes" stroke="#a0a0a2" style="color:#a0a0a2" stroke-width="3.2" transform="translate(51.5,17.5) scale(0.16) translate(-702,-135)"/><use href="#ic_lasso" stroke="#5a90d8" style="color:#5a90d8" stroke-width="3.2" transform="translate(65.4,17.5) scale(0.16) translate(-807,-135)"/><use href="#ic_sticker" stroke="#a0a0a2" style="color:#a0a0a2" stroke-width="3.2" transform="translate(79.9,17.5) scale(0.16) translate(-916,-134)"/><g transform="translate(94.3,17.5)" fill="none" stroke="#a0a0a2" stroke-width="0.55"><rect x="-3.4" y="-3" width="6.8" height="6" rx="0.8"/><path d="M-2.8,2.6 L-0.5,0.5 L0.6,1.4 L1.9,0 L3.2,1.2"/><circle cx="-1.4" cy="-1.2" r="0.8"/></g><use href="#ic_text" stroke="#a0a0a2" style="color:#a0a0a2" stroke-width="3.2" transform="translate(108.3,17.5) scale(0.16) translate(-1136,-136)"/><use href="#ic_laser" stroke="#a0a0a2" style="color:#a0a0a2" stroke-width="3.2" transform="translate(123.2,17.5) scale(0.16) translate(-1250,-138)"/></g><rect x="151.6" y="14" width="29.4" height="7" rx="3.5" stroke="#4a4a4c" stroke-width="0.8" fill="none"/></svg><svg class="a" width="211" height="212" style="left:0;top:0" fill="none" stroke="#2a2a2a" stroke-width="1.1" stroke-linejoin="round"><ellipse cx="140.5" cy="50.4" rx="19.3" ry="8.7"/><path d="M142,67.2 L127.5,88.4 L160.7,88.4 Z"/><rect x="131.3" y="98.8" width="27.2" height="27.2"/><path d="M116.8,112.4 Q104,110 103.2,128.4"/><circle cx="118.4" cy="148.4" r="7.5"/><path d="M131.2,139.6 L119.2,159.6 L136.8,156.4 Z"/><path d="M132.8,145 L148,143.6 L149.6,159.6 L133.5,159.6 Z"/><path d="M105.6,181.2 L134.4,168.4 L155.7,175.6 L155.7,195.6 L121.6,195.6 Z"/></svg><svg class="a" width="211" height="212" style="left:0;top:0" fill="none"><ellipse cx="130.4" cy="149.2" rx="30" ry="15.5" stroke="#cfcfcf" stroke-width="0.8"/><path d="M120.8,89.2 L101.6,98" stroke="#2a2a2a" stroke-width="1.1"/></svg><div class="a pp" style="left:24.5px;top:29.7px;width:82.3px;height:67px;background:#2c2c2e"><div class="a tx" style="left:0px;top:4px;font-size:4px;color:#ddd;width:82px;text-align:center">Lasso Tool</div><div class="a" style="left:0;top:12px;width:82px;height:1px;background:#252527"></div><div class="a tx" style="left:4px;top:16.5px;font-size:3.8px;color:#c8c8c8;">Handwriting</div><div class="a" style="left:65.5px;top:15px;width:13px;height:8px;border-radius:4px;background:#3cc85a"></div><div class="a" style="left:71.0px;top:15.6px;width:6.8px;height:6.8px;border-radius:50%;background:#f0f0f0"></div><div class="a tx" style="left:4px;top:29.5px;font-size:3.8px;color:#c8c8c8;">Images</div><div class="a" style="left:65.5px;top:28px;width:13px;height:8px;border-radius:4px;background:#3cc85a"></div><div class="a" style="left:71.0px;top:28.6px;width:6.8px;height:6.8px;border-radius:50%;background:#f0f0f0"></div><div class="a tx" style="left:4px;top:42px;font-size:3.8px;color:#c8c8c8;">Text Boxes</div><div class="a" style="left:65.5px;top:40.5px;width:13px;height:8px;border-radius:4px;background:#3cc85a"></div><div class="a" style="left:71.0px;top:41.1px;width:6.8px;height:6.8px;border-radius:50%;background:#f0f0f0"></div><div class="a tx" style="left:4px;top:55px;font-size:3.8px;color:#c8c8c8;">Disconnect Apple Pencil</div></div><svg class="a" width="10" height="5" style="left:60.900000000000006px;top:26.3px"><path d="M0,3.5 L5,0 L10,3.5 Z" fill="#2c2c2e"/></svg></div><div class="th" style="left:214.5px;top:0px;width:211px;height:211px"><div class="a" style="left:0;top:0;width:211px;height:211px;background:#2a292d"></div><div class="a" style="left:33px;top:23.4px;width:145.4px;height:187.6px;background:#f6f4e8"></div><div class="a" style="left:0;top:0;width:211px;height:12px;background:#2c3c62"></div><div class="a" style="left:0;top:12px;width:211px;height:11.4px;background:#38383b"></div><div class="a tt" style="left:96px;top:3.5px">utelecon &#8964;</div><svg class="a" width="211" height="12" style="left:0;top:0" fill="none" stroke="#3d7ad0" stroke-width="0.9"><rect x="0.5" y="4.0" width="3" height="3.5"/><path d="M11,8.0 v-3 l2,-1.5 l2,1.5 v3 z"/><path d="M196,4.0 l-1.8,1.5 l1.8,1.5 M194.5,5.5 h3 a1.5,1.5 0 0 1 0,3 h-1"/></svg><svg class="a" width="211" height="30" style="left:0;top:0" fill="none"><g opacity="0.75"><use href="#ic_pen" stroke="#a0a0a2" style="color:#a0a0a2" stroke-width="3.2" transform="translate(8.7,17.5) scale(0.16) translate(-368,-137)"/><use href="#ic_eraser" stroke="#a0a0a2" style="color:#a0a0a2" stroke-width="3.2" transform="translate(23.1,17.5) scale(0.16) translate(-476,-134)"/><use href="#ic_hl" stroke="#a0a0a2" style="color:#a0a0a2" stroke-width="3.2" transform="translate(37.5,17.5) scale(0.16) translate(-587,-133)"/><use href="#ic_shapes" stroke="#5a90d8" style="color:#5a90d8" stroke-width="3.2" transform="translate(51.5,17.5) scale(0.16) translate(-702,-135)"/><use href="#ic_lasso" stroke="#a0a0a2" style="color:#a0a0a2" stroke-width="3.2" transform="translate(65.4,17.5) scale(0.16) translate(-807,-135)"/><use href="#ic_sticker" stroke="#a0a0a2" style="color:#a0a0a2" stroke-width="3.2" transform="translate(79.9,17.5) scale(0.16) translate(-916,-134)"/><g transform="translate(94.3,17.5)" fill="none" stroke="#a0a0a2" stroke-width="0.55"><rect x="-3.4" y="-3" width="6.8" height="6" rx="0.8"/><path d="M-2.8,2.6 L-0.5,0.5 L0.6,1.4 L1.9,0 L3.2,1.2"/><circle cx="-1.4" cy="-1.2" r="0.8"/></g><use href="#ic_text" stroke="#a0a0a2" style="color:#a0a0a2" stroke-width="3.2" transform="translate(108.3,17.5) scale(0.16) translate(-1136,-136)"/><use href="#ic_laser" stroke="#a0a0a2" style="color:#a0a0a2" stroke-width="3.2" transform="translate(123.2,17.5) scale(0.16) translate(-1250,-138)"/></g><circle cx="137" cy="17.5" r="2.6" fill="#d0302a"/><circle cx="148.9" cy="17.5" r="2.6" fill="#3478e0"/><circle cx="160.2" cy="17.5" r="2.6" fill="#111"/><path d="M170.6,17.5 h4" stroke="#999" stroke-width="0.8"/><path d="M181.4,17.5 h5" stroke="#ddd" stroke-width="1.6"/><rect x="192" y="14.5" width="7" height="6" rx="1" fill="#d8d8d8"/><rect x="193" y="16.5" width="5" height="2" fill="#555"/></svg><svg class="a" width="211" height="212" style="left:0;top:0" fill="none" stroke="#2a2a2a" stroke-width="1.1" stroke-linejoin="round"><ellipse cx="140.5" cy="50.4" rx="19.3" ry="8.7"/><path d="M142,67.2 L127.5,88.4 L160.7,88.4 Z"/><rect x="131.3" y="98.8" width="27.2" height="27.2"/><path d="M116.8,112.4 Q104,110 103.2,128.4"/><circle cx="118.4" cy="148.4" r="7.5"/><path d="M131.2,139.6 L119.2,159.6 L136.8,156.4 Z"/><path d="M132.8,145 L148,143.6 L149.6,159.6 L133.5,159.6 Z"/><path d="M105.6,181.2 L134.4,168.4 L155.7,175.6 L155.7,195.6 L121.6,195.6 Z"/></svg><svg class="a" width="211" height="212" style="left:0;top:0" fill="none"><path d="M108.8,72 L101.4,97.3 L120.7,89.9" stroke="#2a2a2a" stroke-width="1.1"/></svg><div class="a pp" style="left:10.9px;top:29px;width:81.6px;height:93.5px;background:#2c2c2e"><div class="a tx" style="left:0px;top:4px;font-size:4px;color:#ddd;width:81px;text-align:center">Shape Tool</div><div class="a" style="left:0;top:12px;width:81px;height:9px;background:#252527"></div><div class="a tx" style="left:4px;top:16.5px;font-size:2.6px;color:#777;">SETTINGS</div><div class="a tx" style="left:4px;top:26.5px;font-size:3.8px;color:#c8c8c8;">Require Hold to Snap</div><div class="a" style="left:64px;top:25px;width:13px;height:8px;border-radius:4px;background:#3a3a3c"></div><div class="a" style="left:64.6px;top:25.6px;width:6.8px;height:6.8px;border-radius:50%;background:#f0f0f0"></div><div class="a" style="left:0;top:36px;width:81px;height:7px;background:#252527"></div><div class="a tx" style="left:4px;top:39px;font-size:2.6px;color:#777;">ADVANCED OPTIONS</div><div class="a tx" style="left:4px;top:49.5px;font-size:3.8px;color:#c8c8c8;">Snap to Other Shapes</div><div class="a" style="left:64px;top:48px;width:13px;height:8px;border-radius:4px;background:#3cc85a"></div><div class="a" style="left:69.5px;top:48.6px;width:6.8px;height:6.8px;border-radius:50%;background:#f0f0f0"></div><div class="a tx" style="left:4px;top:62px;font-size:3.8px;color:#c8c8c8;">Fill Color</div><div class="a" style="left:64px;top:60.5px;width:13px;height:8px;border-radius:4px;background:#3a3a3c"></div><div class="a" style="left:64.6px;top:61.1px;width:6.8px;height:6.8px;border-radius:50%;background:#f0f0f0"></div><div class="a" style="left:0;top:71px;width:81px;height:7px;background:#252527"></div><div class="a tx" style="left:4px;top:81px;font-size:3.8px;color:#c8c8c8;">Disconnect Apple Pencil</div></div><svg class="a" width="10" height="5" style="left:60.400000000000006px;top:25.6px"><path d="M0,3.5 L5,0 L10,3.5 Z" fill="#2c2c2e"/></svg></div><div class="th" style="left:429px;top:0px;width:211px;height:211px"><div class="a" style="left:0;top:0;width:211px;height:211px;background:#2a292d"></div><div class="a" style="left:33px;top:23.4px;width:145.4px;height:187.6px;background:#f6f4e8"></div><div class="a" style="left:0;top:0;width:211px;height:12px;background:#2c3c62"></div><div class="a" style="left:0;top:12px;width:211px;height:11.4px;background:#38383b"></div><div class="a tt" style="left:96px;top:3.5px">utelecon &#8964;</div><svg class="a" width="211" height="12" style="left:0;top:0" fill="none" stroke="#3d7ad0" stroke-width="0.9"><rect x="0.5" y="4.0" width="3" height="3.5"/><path d="M11,8.0 v-3 l2,-1.5 l2,1.5 v3 z"/><path d="M196,4.0 l-1.8,1.5 l1.8,1.5 M194.5,5.5 h3 a1.5,1.5 0 0 1 0,3 h-1"/></svg><svg class="a" width="211" height="30" style="left:0;top:0" fill="none"><g opacity="0.75"><use href="#ic_pen" stroke="#a0a0a2" style="color:#a0a0a2" stroke-width="3.2" transform="translate(8.7,17.5) scale(0.16) translate(-368,-137)"/><use href="#ic_eraser" stroke="#a0a0a2" style="color:#a0a0a2" stroke-width="3.2" transform="translate(23.1,17.5) scale(0.16) translate(-476,-134)"/><use href="#ic_hl" stroke="#5a90d8" style="color:#5a90d8" stroke-width="3.2" transform="translate(37.5,17.5) scale(0.16) translate(-587,-133)"/><use href="#ic_shapes" stroke="#a0a0a2" style="color:#a0a0a2" stroke-width="3.2" transform="translate(51.5,17.5) scale(0.16) translate(-702,-135)"/><use href="#ic_lasso" stroke="#a0a0a2" style="color:#a0a0a2" stroke-width="3.2" transform="translate(65.4,17.5) scale(0.16) translate(-807,-135)"/><use href="#ic_sticker" stroke="#a0a0a2" style="color:#a0a0a2" stroke-width="3.2" transform="translate(79.9,17.5) scale(0.16) translate(-916,-134)"/><g transform="translate(94.3,17.5)" fill="none" stroke="#a0a0a2" stroke-width="0.55"><rect x="-3.4" y="-3" width="6.8" height="6" rx="0.8"/><path d="M-2.8,2.6 L-0.5,0.5 L0.6,1.4 L1.9,0 L3.2,1.2"/><circle cx="-1.4" cy="-1.2" r="0.8"/></g><use href="#ic_text" stroke="#a0a0a2" style="color:#a0a0a2" stroke-width="3.2" transform="translate(108.3,17.5) scale(0.16) translate(-1136,-136)"/><use href="#ic_laser" stroke="#a0a0a2" style="color:#a0a0a2" stroke-width="3.2" transform="translate(123.2,17.5) scale(0.16) translate(-1250,-138)"/></g><circle cx="137" cy="17.5" r="2.4" fill="#c2c23a"/><circle cx="149" cy="17.5" r="2.4" fill="#3aa23c"/><circle cx="160.8" cy="17.5" r="2.4" fill="#3fb0c0"/><circle cx="172.4" cy="17.5" r="1.8" fill="#fff"/><circle cx="184.2" cy="17.5" r="2.9" fill="#fff"/><circle cx="196" cy="17.5" r="3.3" fill="#fff"/></svg><div class="a pp" style="left:143px;top:29px;width:70px;height:47.5px;background:#2c2c2e"><div class="a tx" style="left:10px;top:3px;font-size:3.8px;color:#ccc;">Highlighter thickness</div><div class="a" style="left:0;top:10px;width:80px;height:1px;background:#252527"></div><div class="a tx" style="left:4px;top:28px;font-size:2.8px;color:#999;">0.1mm</div><svg class="a" width="80" height="40" style="left:0;top:0"><path d="M24,30.6 L68,29 L68,32.2 Z" fill="#ddd"/><circle cx="53.4" cy="30.6" r="4.2" fill="#fff"/><circle cx="53.4" cy="30.6" r="2.6" fill="#111"/><path d="M4,5 h3" stroke="#4d8fe0" stroke-width="1"/></svg></div><svg class="a" width="10" height="5" style="left:155.8px;top:25.6px"><path d="M0,3.5 L5,0 L10,3.5 Z" fill="#2c2c2e"/></svg></div><div class="th" style="left:0px;top:215px;width:211px;height:211px"><div class="a" style="left:0;top:0;width:211px;height:211px;background:#2a292d"></div><div class="a" style="left:33px;top:23.4px;width:145.4px;height:187.6px;background:#f6f4e8"></div><div class="a" style="left:0;top:0;width:211px;height:12px;background:#2c3c62"></div><div class="a" style="left:0;top:12px;width:211px;height:11.4px;background:#38383b"></div><div class="a tt" style="left:96px;top:3.5px">utelecon &#8964;</div><svg class="a" width="211" height="12" style="left:0;top:0" fill="none" stroke="#3d7ad0" stroke-width="0.9"><rect x="0.5" y="4.0" width="3" height="3.5"/><path d="M11,8.0 v-3 l2,-1.5 l2,1.5 v3 z"/><path d="M196,4.0 l-1.8,1.5 l1.8,1.5 M194.5,5.5 h3 a1.5,1.5 0 0 1 0,3 h-1"/></svg><svg class="a" width="211" height="30" style="left:0;top:0" fill="none"><g opacity="0.75"><use href="#ic_pen" stroke="#a0a0a2" style="color:#a0a0a2" stroke-width="3.2" transform="translate(8.7,17.5) scale(0.16) translate(-368,-137)"/><use href="#ic_eraser" stroke="#a0a0a2" style="color:#a0a0a2" stroke-width="3.2" transform="translate(23.1,17.5) scale(0.16) translate(-476,-134)"/><use href="#ic_hl" stroke="#5a90d8" style="color:#5a90d8" stroke-width="3.2" transform="translate(37.5,17.5) scale(0.16) translate(-587,-133)"/><use href="#ic_shapes" stroke="#a0a0a2" style="color:#a0a0a2" stroke-width="3.2" transform="translate(51.5,17.5) scale(0.16) translate(-702,-135)"/><use href="#ic_lasso" stroke="#a0a0a2" style="color:#a0a0a2" stroke-width="3.2" transform="translate(65.4,17.5) scale(0.16) translate(-807,-135)"/><use href="#ic_sticker" stroke="#a0a0a2" style="color:#a0a0a2" stroke-width="3.2" transform="translate(79.9,17.5) scale(0.16) translate(-916,-134)"/><g transform="translate(94.3,17.5)" fill="none" stroke="#a0a0a2" stroke-width="0.55"><rect x="-3.4" y="-3" width="6.8" height="6" rx="0.8"/><path d="M-2.8,2.6 L-0.5,0.5 L0.6,1.4 L1.9,0 L3.2,1.2"/><circle cx="-1.4" cy="-1.2" r="0.8"/></g><use href="#ic_text" stroke="#a0a0a2" style="color:#a0a0a2" stroke-width="3.2" transform="translate(108.3,17.5) scale(0.16) translate(-1136,-136)"/><use href="#ic_laser" stroke="#a0a0a2" style="color:#a0a0a2" stroke-width="3.2" transform="translate(123.2,17.5) scale(0.16) translate(-1250,-138)"/></g><circle cx="137" cy="17.5" r="2.4" fill="#c2c23a"/><circle cx="149" cy="17.5" r="2.4" fill="#3aa23c"/><circle cx="160.8" cy="17.5" r="3.9" fill="#3a9fb0"/><circle cx="160.8" cy="17.5" r="2.6" fill="#3fb8c8" stroke="#2a6a78" stroke-width="0.6"/><circle cx="172.4" cy="17.5" r="1.8" fill="#fff"/><circle cx="184.2" cy="17.5" r="2.9" fill="#fff"/><circle cx="196" cy="17.5" r="3.3" fill="#fff"/></svg><div class="a pp" style="left:118.6px;top:31.5px;width:83px;height:107.5px;background:#2c2c2e"><div class="a tx" style="left:0px;top:3.5px;font-size:3.8px;color:#ddd;width:83px;text-align:center">Highlighter Color</div><div class="a" style="left:4.4px;top:18.5px;width:74.8px;height:56.3px;background:linear-gradient(to bottom,rgba(0,0,0,0.85),rgba(0,0,0,0) 45%,rgba(255,255,255,0) 55%,rgba(255,255,255,0.95)),linear-gradient(to right,#555 0,#555 6%,#f00 10%,#f80 25%,#ff0 38%,#0c0 52%,#0cf 66%,#00f 78%,#c0f 90%,#f0c 100%)"></div><div class="a" style="left:5px;top:82px;width:5px;height:5px;border-radius:50%;background:#38b0c0"></div><div class="a tx" style="left:12px;top:83px;font-size:2.6px;color:#999;">Add to Presets</div><div class="a" style="left:41.4px;top:81.5px;width:26.8px;height:7px;background:#050505"></div><div class="a tx" style="left:44px;top:83px;font-size:2.4px;color:#aaa;">HEX 5BDFFF</div><div class="a" style="left:72px;top:82px;width:6px;height:6px;border-radius:50%;background:conic-gradient(#f00,#ff0,#0f0,#0ff,#00f,#f0f,#f00)"></div><div class="a tx" style="left:22px;top:100px;font-size:2.6px;color:#999;">Presets</div><div class="a" style="left:42px;top:98.5px;width:26px;height:6px;border-radius:1.5px;background:#555"></div><div class="a tx" style="left:49px;top:100px;font-size:2.6px;color:#ccc;">Custom</div></div><svg class="a" width="10" height="5" style="left:155px;top:28.1px"><path d="M0,3.5 L5,0 L10,3.5 Z" fill="#2c2c2e"/></svg></div><div class="th" style="left:214.5px;top:215px;width:211px;height:211px"><div class="a" style="left:0;top:0;width:211px;height:211px;background:#2a292d"></div><div class="a" style="left:33px;top:23.4px;width:145.4px;height:187.6px;background:#f6f4e8"></div><div class="a" style="left:0;top:0;width:211px;height:12px;background:#2c3c62"></div><div class="a" style="left:0;top:12px;width:211px;height:11.4px;background:#38383b"></div><div class="a tt" style="left:96px;top:3.5px">utelecon &#8964;</div><svg class="a" width="211" height="12" style="left:0;top:0" fill="none" stroke="#3d7ad0" stroke-width="0.9"><rect x="0.5" y="4.0" width="3" height="3.5"/><path d="M11,8.0 v-3 l2,-1.5 l2,1.5 v3 z"/><path d="M196,4.0 l-1.8,1.5 l1.8,1.5 M194.5,5.5 h3 a1.5,1.5 0 0 1 0,3 h-1"/></svg><svg class="a" width="211" height="30" style="left:0;top:0" fill="none"><g opacity="0.75"><use href="#ic_pen" stroke="#a0a0a2" style="color:#a0a0a2" stroke-width="3.2" transform="translate(8.7,17.5) scale(0.16) translate(-368,-137)"/><use href="#ic_eraser" stroke="#a0a0a2" style="color:#a0a0a2" stroke-width="3.2" transform="translate(23.1,17.5) scale(0.16) translate(-476,-134)"/><use href="#ic_hl" stroke="#5a90d8" style="color:#5a90d8" stroke-width="3.2" transform="translate(37.5,17.5) scale(0.16) translate(-587,-133)"/><use href="#ic_shapes" stroke="#a0a0a2" style="color:#a0a0a2" stroke-width="3.2" transform="translate(51.5,17.5) scale(0.16) translate(-702,-135)"/><use href="#ic_lasso" stroke="#a0a0a2" style="color:#a0a0a2" stroke-width="3.2" transform="translate(65.4,17.5) scale(0.16) translate(-807,-135)"/><use href="#ic_sticker" stroke="#a0a0a2" style="color:#a0a0a2" stroke-width="3.2" transform="translate(79.9,17.5) scale(0.16) translate(-916,-134)"/><g transform="translate(94.3,17.5)" fill="none" stroke="#a0a0a2" stroke-width="0.55"><rect x="-3.4" y="-3" width="6.8" height="6" rx="0.8"/><path d="M-2.8,2.6 L-0.5,0.5 L0.6,1.4 L1.9,0 L3.2,1.2"/><circle cx="-1.4" cy="-1.2" r="0.8"/></g><use href="#ic_text" stroke="#a0a0a2" style="color:#a0a0a2" stroke-width="3.2" transform="translate(108.3,17.5) scale(0.16) translate(-1136,-136)"/><use href="#ic_laser" stroke="#a0a0a2" style="color:#a0a0a2" stroke-width="3.2" transform="translate(123.2,17.5) scale(0.16) translate(-1250,-138)"/></g><circle cx="137" cy="17.5" r="2.4" fill="#c2c23a"/><circle cx="149" cy="17.5" r="2.4" fill="#3aa23c"/><circle cx="160.8" cy="17.5" r="3.9" fill="#3a9fb0"/><circle cx="160.8" cy="17.5" r="2.6" fill="#3fb8c8" stroke="#2a6a78" stroke-width="0.6"/><circle cx="172.4" cy="17.5" r="1.8" fill="#fff"/><circle cx="184.2" cy="17.5" r="2.9" fill="#fff"/><circle cx="196" cy="17.5" r="3.3" fill="#fff"/></svg><div class="a pp" style="left:119.2px;top:31.5px;width:81.6px;height:52.5px;background:#2c2c2e"><div class="a tx" style="left:0px;top:3.5px;font-size:3.8px;color:#ddd;width:82px;text-align:center">Highlighter Color</div><div class="a tx" style="left:70px;top:3.5px;font-size:3px;color:#4d8fe0;">Edit</div><div class="a" style="left:12.0px;top:18.0px;width:5.6px;height:5.6px;border-radius:50%;background:#c8c43a"></div><div class="a" style="left:25.0px;top:18.0px;width:5.6px;height:5.6px;border-radius:50%;background:#3ea63e"></div><div class="a" style="left:38.0px;top:18.0px;width:5.6px;height:5.6px;border-radius:50%;background:#3bb0c2"></div><div class="a" style="left:51.0px;top:18.0px;width:5.6px;height:5.6px;border-radius:50%;background:#d08a48"></div><div class="a" style="left:64.0px;top:18.0px;width:5.6px;height:5.6px;border-radius:50%;background:#b03ab8"></div><div class="a" style="left:12px;top:31.4px;width:5.6px;height:5.6px;border-radius:50%;background:#8ad860"></div><div class="a" style="left:13.3px;top:44.8px;width:26.8px;height:5.5px;border-radius:1.5px;background:#555"></div><div class="a tx" style="left:20px;top:46px;font-size:2.6px;color:#ccc;">Presets</div><div class="a tx" style="left:50px;top:46px;font-size:2.6px;color:#999;">Custom</div></div><svg class="a" width="10" height="5" style="left:155px;top:28.1px"><path d="M0,3.5 L5,0 L10,3.5 Z" fill="#2c2c2e"/></svg></div><div class="th" style="left:429px;top:215px;width:211px;height:211px"><div class="a" style="left:0;top:0;width:211px;height:211px;background:#2a292d"></div><div class="a" style="left:34.7px;top:28.8px;width:142.10000000000002px;height:182.2px;background:#f6f4e8"></div><div class="a" style="left:0;top:0;width:211px;height:16.5px;background:#2c3c62"></div><div class="a" style="left:0;top:16.5px;width:211px;height:12.3px;background:#38383b"></div><div class="a tt" style="left:96px;top:5.75px">utelecon &#8964;</div><svg class="a" width="211" height="16.5" style="left:0;top:0" fill="none" stroke="#3d7ad0" stroke-width="0.9"><rect x="0.5" y="6.25" width="3" height="3.5"/><path d="M11,10.25 v-3 l2,-1.5 l2,1.5 v3 z"/><path d="M196,6.25 l-1.8,1.5 l1.8,1.5 M194.5,7.75 h3 a1.5,1.5 0 0 1 0,3 h-1"/></svg><svg class="a" width="211" height="30" style="left:0;top:0" fill="none"><g opacity="0.75"><use href="#ic_pen" stroke="#a0a0a2" style="color:#a0a0a2" stroke-width="3.2" transform="translate(8.7,22.2) scale(0.16) translate(-368,-137)"/><use href="#ic_eraser" stroke="#a0a0a2" style="color:#a0a0a2" stroke-width="3.2" transform="translate(23.1,22.2) scale(0.16) translate(-476,-134)"/><use href="#ic_hl" stroke="#5a90d8" style="color:#5a90d8" stroke-width="3.2" transform="translate(37.5,22.2) scale(0.16) translate(-587,-133)"/><use href="#ic_shapes" stroke="#a0a0a2" style="color:#a0a0a2" stroke-width="3.2" transform="translate(51.5,22.2) scale(0.16) translate(-702,-135)"/><use href="#ic_lasso" stroke="#a0a0a2" style="color:#a0a0a2" stroke-width="3.2" transform="translate(65.4,22.2) scale(0.16) translate(-807,-135)"/><use href="#ic_sticker" stroke="#a0a0a2" style="color:#a0a0a2" stroke-width="3.2" transform="translate(79.9,22.2) scale(0.16) translate(-916,-134)"/><g transform="translate(94.3,22.2)" fill="none" stroke="#a0a0a2" stroke-width="0.55"><rect x="-3.4" y="-3" width="6.8" height="6" rx="0.8"/><path d="M-2.8,2.6 L-0.5,0.5 L0.6,1.4 L1.9,0 L3.2,1.2"/><circle cx="-1.4" cy="-1.2" r="0.8"/></g><use href="#ic_text" stroke="#a0a0a2" style="color:#a0a0a2" stroke-width="3.2" transform="translate(108.3,22.2) scale(0.16) translate(-1136,-136)"/><use href="#ic_laser" stroke="#a0a0a2" style="color:#a0a0a2" stroke-width="3.2" transform="translate(123.2,22.2) scale(0.16) translate(-1250,-138)"/></g><circle cx="137" cy="22.2" r="2.4" fill="#c2c23a"/><circle cx="149" cy="22.2" r="2.4" fill="#3aa23c"/><circle cx="160.8" cy="22.2" r="2.4" fill="#3fb0c0"/><circle cx="172.4" cy="22.2" r="1.8" fill="#fff"/><circle cx="184.2" cy="22.2" r="2.9" fill="#fff"/><circle cx="196" cy="22.2" r="3.3" fill="#fff"/></svg><svg class="a" width="211" height="212" style="left:0;top:0" fill="none" stroke-linecap="round"><path d="M82.7,57.4 L152.5,57.4" stroke="#f2ec7c" stroke-width="4" opacity="0.9"/><path d="M100.6,39.5 L100.6,116.7" stroke="#eeaacb" stroke-width="3.4" opacity="0.9"/><path d="M140.6,41.6 L127.3,82.6" stroke="#7add58" stroke-width="3.4"/><path d="M86.6,97.4 L146,97.4" stroke="#eeaacb" stroke-width="3.4" opacity="0.9"/><path d="M135.3,87 L135.3,116.7" stroke="#7ee0e8" stroke-width="3.4"/></svg><div class="a pp" style="left:1.1px;top:33.6px;width:77.8px;height:40.7px;background:#2c2c2e"><div class="a tx" style="left:0px;top:4px;font-size:3.8px;color:#ddd;width:78px;text-align:center">Highlighter</div><div class="a" style="left:0;top:11px;width:78px;height:1px;background:#252527"></div><div class="a tx" style="left:2px;top:17px;font-size:3.8px;color:#c8c8c8;">Draw in Straight Line</div><div class="a" style="left:61.5px;top:15px;width:13px;height:8px;border-radius:4px;background:#3cc85a"></div><div class="a" style="left:67.0px;top:15.6px;width:6.8px;height:6.8px;border-radius:50%;background:#f0f0f0"></div><div class="a tx" style="left:2px;top:29.5px;font-size:3.8px;color:#c8c8c8;">Disconnect Apple Pencil</div></div><svg class="a" width="10" height="5" style="left:32.5px;top:30.200000000000003px"><path d="M0,3.5 L5,0 L10,3.5 Z" fill="#2c2c2e"/></svg></div><div class="th" style="left:0px;top:430px;width:211px;height:211px"><div class="a" style="left:0;top:0;width:211px;height:211px;background:#2a292d"></div><div class="a" style="left:33px;top:23.4px;width:145.4px;height:187.6px;background:#f6f4e8"></div><div class="a" style="left:0;top:0;width:211px;height:12px;background:#2c3c62"></div><div class="a" style="left:0;top:12px;width:211px;height:11.4px;background:#38383b"></div><div class="a tt" style="left:96px;top:3.5px">utelecon &#8964;</div><svg class="a" width="211" height="12" style="left:0;top:0" fill="none" stroke="#3d7ad0" stroke-width="0.9"><rect x="0.5" y="4.0" width="3" height="3.5"/><path d="M11,8.0 v-3 l2,-1.5 l2,1.5 v3 z"/><path d="M196,4.0 l-1.8,1.5 l1.8,1.5 M194.5,5.5 h3 a1.5,1.5 0 0 1 0,3 h-1"/></svg><svg class="a" width="211" height="30" style="left:0;top:0" fill="none"><g opacity="0.75"><use href="#ic_pen" stroke="#a0a0a2" style="color:#a0a0a2" stroke-width="3.2" transform="translate(8.7,17.5) scale(0.16) translate(-368,-137)"/><use href="#ic_eraser" stroke="#5a90d8" style="color:#5a90d8" stroke-width="3.2" transform="translate(23.1,17.5) scale(0.16) translate(-476,-134)"/><use href="#ic_hl" stroke="#a0a0a2" style="color:#a0a0a2" stroke-width="3.2" transform="translate(37.5,17.5) scale(0.16) translate(-587,-133)"/><use href="#ic_shapes" stroke="#a0a0a2" style="color:#a0a0a2" stroke-width="3.2" transform="translate(51.5,17.5) scale(0.16) translate(-702,-135)"/><use href="#ic_lasso" stroke="#a0a0a2" style="color:#a0a0a2" stroke-width="3.2" transform="translate(65.4,17.5) scale(0.16) translate(-807,-135)"/><use href="#ic_sticker" stroke="#a0a0a2" style="color:#a0a0a2" stroke-width="3.2" transform="translate(79.9,17.5) scale(0.16) translate(-916,-134)"/><g transform="translate(94.3,17.5)" fill="none" stroke="#a0a0a2" stroke-width="0.55"><rect x="-3.4" y="-3" width="6.8" height="6" rx="0.8"/><path d="M-2.8,2.6 L-0.5,0.5 L0.6,1.4 L1.9,0 L3.2,1.2"/><circle cx="-1.4" cy="-1.2" r="0.8"/></g><use href="#ic_text" stroke="#a0a0a2" style="color:#a0a0a2" stroke-width="3.2" transform="translate(108.3,17.5) scale(0.16) translate(-1136,-136)"/><use href="#ic_laser" stroke="#a0a0a2" style="color:#a0a0a2" stroke-width="3.2" transform="translate(123.2,17.5) scale(0.16) translate(-1250,-138)"/></g><circle cx="142.3" cy="17.5" r="2.3" fill="#fff"/><circle cx="160.1" cy="17.5" r="3.6" fill="#e8f0ff" stroke="#9bb8e8" stroke-width="0.6"/><rect x="174.4" y="14" width="22.2" height="7" rx="2" fill="#f2f2f2"/></svg><div class="a pp" style="left:-1px;top:29px;width:64.7px;height:105.4px;background:#2c2c2e"><div class="a tx" style="left:14px;top:4px;font-size:3.8px;color:#ddd;">Eraser</div><div class="a" style="left:0;top:12px;width:64px;height:9px;background:#252527"></div><div class="a tx" style="left:-4px;top:16px;font-size:2.6px;color:#777;">MODE</div><div class="a tx" style="left:-4px;top:27px;font-size:3.8px;color:#c8c8c8;">Entire Stroke</div><div class="a" style="left:50px;top:25px;width:13px;height:8px;border-radius:4px;background:#3a3a3c"></div><div class="a" style="left:50.6px;top:25.6px;width:6.8px;height:6.8px;border-radius:50%;background:#f0f0f0"></div><div class="a" style="left:0;top:36px;width:64px;height:6px;background:#252527"></div><div class="a tx" style="left:-8px;top:45px;font-size:3.8px;color:#c8c8c8;">Highlighter Only</div><div class="a" style="left:50px;top:43.5px;width:13px;height:8px;border-radius:4px;background:#3a3a3c"></div><div class="a" style="left:50.6px;top:44.1px;width:6.8px;height:6.8px;border-radius:50%;background:#f0f0f0"></div><div class="a tx" style="left:-8px;top:58.5px;font-size:3px;color:#d03030;">Erase all</div><div class="a" style="left:0;top:64px;width:64px;height:14px;background:#262628"></div><div class="a tx" style="left:-8px;top:81px;font-size:3.8px;color:#c8c8c8;">Auto-deselect</div><div class="a" style="left:50px;top:79px;width:13px;height:8px;border-radius:4px;background:#3a3a3c"></div><div class="a" style="left:50.6px;top:79.6px;width:6.8px;height:6.8px;border-radius:50%;background:#f0f0f0"></div><div class="a tx" style="left:-8px;top:93.5px;font-size:3.8px;color:#c8c8c8;">Disconnect Apple Pencil</div></div><svg class="a" width="10" height="5" style="left:17.7px;top:25.6px"><path d="M0,3.5 L5,0 L10,3.5 Z" fill="#2c2c2e"/></svg></div><div class="th" style="left:214.5px;top:430px;width:211px;height:211px"><div class="a" style="left:0;top:0;width:211px;height:211px;background:#2a292d"></div><div class="a" style="left:33px;top:23.4px;width:145.4px;height:187.6px;background:#f6f4e8"></div><div class="a" style="left:0;top:0;width:211px;height:12px;background:#2c3c62"></div><div class="a" style="left:0;top:12px;width:211px;height:11.4px;background:#38383b"></div><div class="a tt" style="left:96px;top:3.5px">utelecon &#8964;</div><svg class="a" width="211" height="12" style="left:0;top:0" fill="none" stroke="#3d7ad0" stroke-width="0.9"><rect x="0.5" y="4.0" width="3" height="3.5"/><path d="M11,8.0 v-3 l2,-1.5 l2,1.5 v3 z"/><path d="M196,4.0 l-1.8,1.5 l1.8,1.5 M194.5,5.5 h3 a1.5,1.5 0 0 1 0,3 h-1"/></svg><svg class="a" width="211" height="30" style="left:0;top:0" fill="none"><g opacity="0.75"><use href="#ic_pen" stroke="#5a90d8" style="color:#5a90d8" stroke-width="3.2" transform="translate(8.7,17.5) scale(0.16) translate(-368,-137)"/><use href="#ic_eraser" stroke="#a0a0a2" style="color:#a0a0a2" stroke-width="3.2" transform="translate(23.1,17.5) scale(0.16) translate(-476,-134)"/><use href="#ic_hl" stroke="#a0a0a2" style="color:#a0a0a2" stroke-width="3.2" transform="translate(37.5,17.5) scale(0.16) translate(-587,-133)"/><use href="#ic_shapes" stroke="#a0a0a2" style="color:#a0a0a2" stroke-width="3.2" transform="translate(51.5,17.5) scale(0.16) translate(-702,-135)"/><use href="#ic_lasso" stroke="#a0a0a2" style="color:#a0a0a2" stroke-width="3.2" transform="translate(65.4,17.5) scale(0.16) translate(-807,-135)"/><use href="#ic_sticker" stroke="#a0a0a2" style="color:#a0a0a2" stroke-width="3.2" transform="translate(79.9,17.5) scale(0.16) translate(-916,-134)"/><g transform="translate(94.3,17.5)" fill="none" stroke="#a0a0a2" stroke-width="0.55"><rect x="-3.4" y="-3" width="6.8" height="6" rx="0.8"/><path d="M-2.8,2.6 L-0.5,0.5 L0.6,1.4 L1.9,0 L3.2,1.2"/><circle cx="-1.4" cy="-1.2" r="0.8"/></g><use href="#ic_text" stroke="#a0a0a2" style="color:#a0a0a2" stroke-width="3.2" transform="translate(108.3,17.5) scale(0.16) translate(-1136,-136)"/><use href="#ic_laser" stroke="#a0a0a2" style="color:#a0a0a2" stroke-width="3.2" transform="translate(123.2,17.5) scale(0.16) translate(-1250,-138)"/></g><circle cx="137" cy="17.5" r="2.6" fill="#d0302a"/><circle cx="148.9" cy="17.5" r="2.6" fill="#3478e0"/><circle cx="160.2" cy="17.5" r="2.6" fill="#111"/><path d="M170.6,17.5 h4" stroke="#999" stroke-width="0.8"/><path d="M181.4,17.5 h5" stroke="#ddd" stroke-width="1.6"/><rect x="192" y="14.5" width="7" height="6" rx="1" fill="#d8d8d8"/><rect x="193" y="16.5" width="5" height="2" fill="#555"/></svg><div class="a pp" style="left:154.8px;top:29px;width:60px;height:48.4px;background:#2c2c2e"><div class="a tx" style="left:22px;top:3px;font-size:3.8px;color:#ccc;">Pen thickness</div><div class="a" style="left:0;top:10px;width:60px;height:1px;background:#252527"></div><div class="a tx" style="left:4px;top:28.5px;font-size:2.8px;color:#999;">0.3mm</div><svg class="a" width="60" height="40" style="left:0;top:0"><path d="M28,30.6 L60,30 L60,31.2 Z" fill="#ccc"/><circle cx="46.6" cy="30.6" r="3.4" fill="#fff"/><circle cx="46.6" cy="30.6" r="1.4" fill="#333"/></svg></div><svg class="a" width="10" height="5" style="left:167.6px;top:25.6px"><path d="M0,3.5 L5,0 L10,3.5 Z" fill="#2c2c2e"/></svg></div><div class="th" style="left:429px;top:430px;width:211px;height:211px"><div class="a" style="left:0;top:0;width:211px;height:211px;background:#2a292d"></div><div class="a" style="left:33px;top:23.4px;width:145.4px;height:187.6px;background:#f6f4e8"></div><div class="a" style="left:0;top:0;width:211px;height:12px;background:#2c3c62"></div><div class="a" style="left:0;top:12px;width:211px;height:11.4px;background:#38383b"></div><div class="a tt" style="left:96px;top:3.5px">utelecon &#8964;</div><svg class="a" width="211" height="12" style="left:0;top:0" fill="none" stroke="#3d7ad0" stroke-width="0.9"><rect x="0.5" y="4.0" width="3" height="3.5"/><path d="M11,8.0 v-3 l2,-1.5 l2,1.5 v3 z"/><path d="M196,4.0 l-1.8,1.5 l1.8,1.5 M194.5,5.5 h3 a1.5,1.5 0 0 1 0,3 h-1"/></svg><svg class="a" width="211" height="30" style="left:0;top:0" fill="none"><g opacity="0.75"><use href="#ic_pen" stroke="#5a90d8" style="color:#5a90d8" stroke-width="3.2" transform="translate(8.7,17.5) scale(0.16) translate(-368,-137)"/><use href="#ic_eraser" stroke="#a0a0a2" style="color:#a0a0a2" stroke-width="3.2" transform="translate(23.1,17.5) scale(0.16) translate(-476,-134)"/><use href="#ic_hl" stroke="#a0a0a2" style="color:#a0a0a2" stroke-width="3.2" transform="translate(37.5,17.5) scale(0.16) translate(-587,-133)"/><use href="#ic_shapes" stroke="#a0a0a2" style="color:#a0a0a2" stroke-width="3.2" transform="translate(51.5,17.5) scale(0.16) translate(-702,-135)"/><use href="#ic_lasso" stroke="#a0a0a2" style="color:#a0a0a2" stroke-width="3.2" transform="translate(65.4,17.5) scale(0.16) translate(-807,-135)"/><use href="#ic_sticker" stroke="#a0a0a2" style="color:#a0a0a2" stroke-width="3.2" transform="translate(79.9,17.5) scale(0.16) translate(-916,-134)"/><g transform="translate(94.3,17.5)" fill="none" stroke="#a0a0a2" stroke-width="0.55"><rect x="-3.4" y="-3" width="6.8" height="6" rx="0.8"/><path d="M-2.8,2.6 L-0.5,0.5 L0.6,1.4 L1.9,0 L3.2,1.2"/><circle cx="-1.4" cy="-1.2" r="0.8"/></g><use href="#ic_text" stroke="#a0a0a2" style="color:#a0a0a2" stroke-width="3.2" transform="translate(108.3,17.5) scale(0.16) translate(-1136,-136)"/><use href="#ic_laser" stroke="#a0a0a2" style="color:#a0a0a2" stroke-width="3.2" transform="translate(123.2,17.5) scale(0.16) translate(-1250,-138)"/></g><circle cx="137" cy="17.5" r="2.6" fill="#d0302a"/><circle cx="148.9" cy="17.5" r="2.6" fill="#3478e0"/><circle cx="160.2" cy="17.5" r="3.6" fill="none" stroke="#777" stroke-width="0.8"/><circle cx="160.2" cy="17.5" r="2.6" fill="#111"/><path d="M170.6,17.5 h4" stroke="#999" stroke-width="0.8"/><path d="M181.4,17.5 h5" stroke="#ddd" stroke-width="1.6"/><rect x="192" y="14.5" width="7" height="6" rx="1" fill="#d8d8d8"/><rect x="193" y="16.5" width="5" height="2" fill="#555"/></svg><div class="a pp" style="left:119.2px;top:31.1px;width:82.2px;height:108.6px;background:#2c2c2e"><div class="a tx" style="left:0px;top:3.5px;font-size:3.8px;color:#ddd;width:82px;text-align:center">Pen Color</div><div class="a" style="left:3.6px;top:17.2px;width:75.1px;height:58.7px;background:linear-gradient(to bottom,rgba(0,0,0,0.85),rgba(0,0,0,0) 45%,rgba(255,255,255,0) 55%,rgba(255,255,255,0.95)),linear-gradient(to right,#555 0,#555 6%,#f00 10%,#f80 25%,#ff0 38%,#0c0 52%,#0cf 66%,#00f 78%,#c0f 90%,#f0c 100%)"></div><div class="a" style="left:4px;top:18px;width:5px;height:5px;background:#fff;border:1px solid #000"></div><div class="a" style="left:4px;top:83px;width:5px;height:5px;border-radius:50%;background:#000;border:0.5px solid #888"></div><div class="a tx" style="left:12px;top:84px;font-size:2.6px;color:#999;">Add to Presets</div><div class="a" style="left:41px;top:82.5px;width:26.8px;height:7px;background:#050505"></div><div class="a tx" style="left:44px;top:84px;font-size:2.4px;color:#aaa;">HEX 000000</div><div class="a" style="left:72px;top:83px;width:6px;height:6px;border-radius:50%;background:conic-gradient(#f00,#ff0,#0f0,#0ff,#00f,#f0f,#f00)"></div><div class="a tx" style="left:22px;top:100px;font-size:2.6px;color:#999;">Presets</div><div class="a" style="left:42px;top:99px;width:26px;height:6px;border-radius:1.5px;background:#555"></div><div class="a tx" style="left:49px;top:100.5px;font-size:2.6px;color:#ccc;">Custom</div></div><svg class="a" width="10" height="5" style="left:155.2px;top:27.700000000000003px"><path d="M0,3.5 L5,0 L10,3.5 Z" fill="#2c2c2e"/></svg></div><div class="th" style="left:0px;top:645px;width:211px;height:211px"><div class="a" style="left:0;top:0;width:211px;height:211px;background:#2a292d"></div><div class="a" style="left:33px;top:23.4px;width:145.4px;height:187.6px;background:#f6f4e8"></div><div class="a" style="left:0;top:0;width:211px;height:12px;background:#2c3c62"></div><div class="a" style="left:0;top:12px;width:211px;height:11.4px;background:#38383b"></div><div class="a tt" style="left:96px;top:3.5px">utelecon &#8964;</div><svg class="a" width="211" height="12" style="left:0;top:0" fill="none" stroke="#3d7ad0" stroke-width="0.9"><rect x="0.5" y="4.0" width="3" height="3.5"/><path d="M11,8.0 v-3 l2,-1.5 l2,1.5 v3 z"/><path d="M196,4.0 l-1.8,1.5 l1.8,1.5 M194.5,5.5 h3 a1.5,1.5 0 0 1 0,3 h-1"/></svg><svg class="a" width="211" height="30" style="left:0;top:0" fill="none"><g opacity="0.75"><use href="#ic_pen" stroke="#5a90d8" style="color:#5a90d8" stroke-width="3.2" transform="translate(8.7,17.5) scale(0.16) translate(-368,-137)"/><use href="#ic_eraser" stroke="#a0a0a2" style="color:#a0a0a2" stroke-width="3.2" transform="translate(23.1,17.5) scale(0.16) translate(-476,-134)"/><use href="#ic_hl" stroke="#a0a0a2" style="color:#a0a0a2" stroke-width="3.2" transform="translate(37.5,17.5) scale(0.16) translate(-587,-133)"/><use href="#ic_shapes" stroke="#a0a0a2" style="color:#a0a0a2" stroke-width="3.2" transform="translate(51.5,17.5) scale(0.16) translate(-702,-135)"/><use href="#ic_lasso" stroke="#a0a0a2" style="color:#a0a0a2" stroke-width="3.2" transform="translate(65.4,17.5) scale(0.16) translate(-807,-135)"/><use href="#ic_sticker" stroke="#a0a0a2" style="color:#a0a0a2" stroke-width="3.2" transform="translate(79.9,17.5) scale(0.16) translate(-916,-134)"/><g transform="translate(94.3,17.5)" fill="none" stroke="#a0a0a2" stroke-width="0.55"><rect x="-3.4" y="-3" width="6.8" height="6" rx="0.8"/><path d="M-2.8,2.6 L-0.5,0.5 L0.6,1.4 L1.9,0 L3.2,1.2"/><circle cx="-1.4" cy="-1.2" r="0.8"/></g><use href="#ic_text" stroke="#a0a0a2" style="color:#a0a0a2" stroke-width="3.2" transform="translate(108.3,17.5) scale(0.16) translate(-1136,-136)"/><use href="#ic_laser" stroke="#a0a0a2" style="color:#a0a0a2" stroke-width="3.2" transform="translate(123.2,17.5) scale(0.16) translate(-1250,-138)"/></g><circle cx="137" cy="17.5" r="2.6" fill="#d0302a"/><circle cx="148.9" cy="17.5" r="2.6" fill="#3478e0"/><circle cx="160.2" cy="17.5" r="3.6" fill="none" stroke="#777" stroke-width="0.8"/><circle cx="160.2" cy="17.5" r="2.6" fill="#111"/><path d="M170.6,17.5 h4" stroke="#999" stroke-width="0.8"/><path d="M181.4,17.5 h5" stroke="#ddd" stroke-width="1.6"/><rect x="192" y="14.5" width="7" height="6" rx="1" fill="#d8d8d8"/><rect x="193" y="16.5" width="5" height="2" fill="#555"/></svg><div class="a pp" style="left:119.2px;top:31.1px;width:82px;height:58px;background:#2c2c2e"><div class="a tx" style="left:0px;top:3.5px;font-size:3.8px;color:#ddd;width:82px;text-align:center">Pen Color</div><div class="a tx" style="left:70px;top:3.5px;font-size:3px;color:#4d8fe0;">Edit</div><div class="a" style="left:9.2px;top:18.2px;width:5.6px;height:5.6px;border-radius:50%;background:#111"></div><div class="a" style="left:22.2px;top:18.2px;width:5.6px;height:5.6px;border-radius:50%;background:#555"></div><div class="a" style="left:35.2px;top:18.2px;width:5.6px;height:5.6px;border-radius:50%;background:#888"></div><div class="a" style="left:48.2px;top:18.2px;width:5.6px;height:5.6px;border-radius:50%;background:#bbb"></div><div class="a" style="left:61.2px;top:18.2px;width:5.6px;height:5.6px;border-radius:50%;background:#fff"></div><div class="a" style="left:9.2px;top:31.2px;width:5.6px;height:5.6px;border-radius:50%;background:#c03030"></div><div class="a" style="left:22.2px;top:31.2px;width:5.6px;height:5.6px;border-radius:50%;background:#e06040"></div><div class="a" style="left:35.2px;top:31.2px;width:5.6px;height:5.6px;border-radius:50%;background:#d09030"></div><div class="a" style="left:48.2px;top:31.2px;width:5.6px;height:5.6px;border-radius:50%;background:#40a040"></div><div class="a" style="left:61.2px;top:31.2px;width:5.6px;height:5.6px;border-radius:50%;background:#3070d0"></div><div class="a" style="left:12px;top:48px;width:26.8px;height:5.5px;border-radius:1.5px;background:#555"></div></div><svg class="a" width="10" height="5" style="left:155.2px;top:27.700000000000003px"><path d="M0,3.5 L5,0 L10,3.5 Z" fill="#2c2c2e"/></svg></div><div class="th" style="left:214.5px;top:645px;width:211px;height:211px"><div class="a" style="left:0;top:0;width:211px;height:211px;background:#2a292d"></div><div class="a" style="left:33px;top:23.4px;width:145.4px;height:187.6px;background:#f6f4e8"></div><div class="a" style="left:0;top:0;width:211px;height:12px;background:#2c3c62"></div><div class="a" style="left:0;top:12px;width:211px;height:11.4px;background:#38383b"></div><div class="a tt" style="left:96px;top:3.5px">utelecon &#8964;</div><svg class="a" width="211" height="12" style="left:0;top:0" fill="none" stroke="#3d7ad0" stroke-width="0.9"><rect x="0.5" y="4.0" width="3" height="3.5"/><path d="M11,8.0 v-3 l2,-1.5 l2,1.5 v3 z"/><path d="M196,4.0 l-1.8,1.5 l1.8,1.5 M194.5,5.5 h3 a1.5,1.5 0 0 1 0,3 h-1"/></svg><svg class="a" width="211" height="30" style="left:0;top:0" fill="none"><g opacity="0.75"><use href="#ic_pen" stroke="#5a90d8" style="color:#5a90d8" stroke-width="3.2" transform="translate(8.7,17.5) scale(0.16) translate(-368,-137)"/><use href="#ic_eraser" stroke="#a0a0a2" style="color:#a0a0a2" stroke-width="3.2" transform="translate(23.1,17.5) scale(0.16) translate(-476,-134)"/><use href="#ic_hl" stroke="#a0a0a2" style="color:#a0a0a2" stroke-width="3.2" transform="translate(37.5,17.5) scale(0.16) translate(-587,-133)"/><use href="#ic_shapes" stroke="#a0a0a2" style="color:#a0a0a2" stroke-width="3.2" transform="translate(51.5,17.5) scale(0.16) translate(-702,-135)"/><use href="#ic_lasso" stroke="#a0a0a2" style="color:#a0a0a2" stroke-width="3.2" transform="translate(65.4,17.5) scale(0.16) translate(-807,-135)"/><use href="#ic_sticker" stroke="#a0a0a2" style="color:#a0a0a2" stroke-width="3.2" transform="translate(79.9,17.5) scale(0.16) translate(-916,-134)"/><g transform="translate(94.3,17.5)" fill="none" stroke="#a0a0a2" stroke-width="0.55"><rect x="-3.4" y="-3" width="6.8" height="6" rx="0.8"/><path d="M-2.8,2.6 L-0.5,0.5 L0.6,1.4 L1.9,0 L3.2,1.2"/><circle cx="-1.4" cy="-1.2" r="0.8"/></g><use href="#ic_text" stroke="#a0a0a2" style="color:#a0a0a2" stroke-width="3.2" transform="translate(108.3,17.5) scale(0.16) translate(-1136,-136)"/><use href="#ic_laser" stroke="#a0a0a2" style="color:#a0a0a2" stroke-width="3.2" transform="translate(123.2,17.5) scale(0.16) translate(-1250,-138)"/></g><circle cx="137" cy="17.5" r="2.6" fill="#d0302a"/><circle cx="148.9" cy="17.5" r="2.6" fill="#3478e0"/><circle cx="160.2" cy="17.5" r="3.6" fill="none" stroke="#777" stroke-width="0.8"/><circle cx="160.2" cy="17.5" r="2.6" fill="#111"/><path d="M170.6,17.5 h4" stroke="#999" stroke-width="0.8"/><path d="M181.4,17.5 h5" stroke="#ddd" stroke-width="1.6"/><rect x="192" y="14.5" width="7" height="6" rx="1" fill="#d8d8d8"/><rect x="193" y="16.5" width="5" height="2" fill="#555"/></svg><div class="a pp" style="left:119.2px;top:31.1px;width:82px;height:58px;background:#2c2c2e"><div class="a tx" style="left:0px;top:3.5px;font-size:3.8px;color:#ddd;width:82px;text-align:center">Pen Color</div><div class="a tx" style="left:70px;top:3.5px;font-size:3px;color:#4d8fe0;">Edit</div><div class="a" style="left:9.2px;top:18.2px;width:5.6px;height:5.6px;border-radius:50%;background:#111"></div><div class="a" style="left:22.2px;top:18.2px;width:5.6px;height:5.6px;border-radius:50%;background:#555"></div><div class="a" style="left:35.2px;top:18.2px;width:5.6px;height:5.6px;border-radius:50%;background:#888"></div><div class="a" style="left:48.2px;top:18.2px;width:5.6px;height:5.6px;border-radius:50%;background:#bbb"></div><div class="a" style="left:61.2px;top:18.2px;width:5.6px;height:5.6px;border-radius:50%;background:#fff"></div><div class="a" style="left:9.2px;top:31.2px;width:5.6px;height:5.6px;border-radius:50%;background:#c03030"></div><div class="a" style="left:22.2px;top:31.2px;width:5.6px;height:5.6px;border-radius:50%;background:#e06040"></div><div class="a" style="left:35.2px;top:31.2px;width:5.6px;height:5.6px;border-radius:50%;background:#d09030"></div><div class="a" style="left:48.2px;top:31.2px;width:5.6px;height:5.6px;border-radius:50%;background:#40a040"></div><div class="a" style="left:61.2px;top:31.2px;width:5.6px;height:5.6px;border-radius:50%;background:#3070d0"></div><div class="a" style="left:12px;top:48px;width:26.8px;height:5.5px;border-radius:1.5px;background:#555"></div></div><svg class="a" width="10" height="5" style="left:155.2px;top:27.700000000000003px"><path d="M0,3.5 L5,0 L10,3.5 Z" fill="#2c2c2e"/></svg></div><div class="th" style="left:429px;top:645px;width:211px;height:211px"><div class="a" style="left:0;top:0;width:211px;height:211px;background:#2a292d"></div><div class="a" style="left:33px;top:23.4px;width:145.4px;height:187.6px;background:#f6f4e8"></div><div class="a" style="left:0;top:0;width:211px;height:12px;background:#2c3c62"></div><div class="a" style="left:0;top:12px;width:211px;height:11.4px;background:#38383b"></div><div class="a tt" style="left:96px;top:3.5px">utelecon &#8964;</div><svg class="a" width="211" height="12" style="left:0;top:0" fill="none" stroke="#3d7ad0" stroke-width="0.9"><rect x="0.5" y="4.0" width="3" height="3.5"/><path d="M11,8.0 v-3 l2,-1.5 l2,1.5 v3 z"/><path d="M196,4.0 l-1.8,1.5 l1.8,1.5 M194.5,5.5 h3 a1.5,1.5 0 0 1 0,3 h-1"/></svg><svg class="a" width="211" height="30" style="left:0;top:0" fill="none"><g opacity="0.75"><use href="#ic_pen" stroke="#5a90d8" style="color:#5a90d8" stroke-width="3.2" transform="translate(8.7,17.5) scale(0.16) translate(-368,-137)"/><use href="#ic_eraser" stroke="#a0a0a2" style="color:#a0a0a2" stroke-width="3.2" transform="translate(23.1,17.5) scale(0.16) translate(-476,-134)"/><use href="#ic_hl" stroke="#a0a0a2" style="color:#a0a0a2" stroke-width="3.2" transform="translate(37.5,17.5) scale(0.16) translate(-587,-133)"/><use href="#ic_shapes" stroke="#a0a0a2" style="color:#a0a0a2" stroke-width="3.2" transform="translate(51.5,17.5) scale(0.16) translate(-702,-135)"/><use href="#ic_lasso" stroke="#a0a0a2" style="color:#a0a0a2" stroke-width="3.2" transform="translate(65.4,17.5) scale(0.16) translate(-807,-135)"/><use href="#ic_sticker" stroke="#a0a0a2" style="color:#a0a0a2" stroke-width="3.2" transform="translate(79.9,17.5) scale(0.16) translate(-916,-134)"/><g transform="translate(94.3,17.5)" fill="none" stroke="#a0a0a2" stroke-width="0.55"><rect x="-3.4" y="-3" width="6.8" height="6" rx="0.8"/><path d="M-2.8,2.6 L-0.5,0.5 L0.6,1.4 L1.9,0 L3.2,1.2"/><circle cx="-1.4" cy="-1.2" r="0.8"/></g><use href="#ic_text" stroke="#a0a0a2" style="color:#a0a0a2" stroke-width="3.2" transform="translate(108.3,17.5) scale(0.16) translate(-1136,-136)"/><use href="#ic_laser" stroke="#a0a0a2" style="color:#a0a0a2" stroke-width="3.2" transform="translate(123.2,17.5) scale(0.16) translate(-1250,-138)"/></g><circle cx="137" cy="17.5" r="2.6" fill="#d0302a"/><circle cx="148.9" cy="17.5" r="2.6" fill="#3478e0"/><circle cx="160.2" cy="17.5" r="3.6" fill="none" stroke="#777" stroke-width="0.8"/><circle cx="160.2" cy="17.5" r="2.6" fill="#111"/><path d="M170.6,17.5 h4" stroke="#999" stroke-width="0.8"/><path d="M181.4,17.5 h5" stroke="#ddd" stroke-width="1.6"/><rect x="192" y="14.5" width="7" height="6" rx="1" fill="#d8d8d8"/><rect x="193" y="16.5" width="5" height="2" fill="#555"/></svg><div class="a pp" style="left:119.2px;top:31.1px;width:82px;height:58px;background:#2c2c2e"><div class="a tx" style="left:0px;top:3.5px;font-size:3.8px;color:#ddd;width:82px;text-align:center">Pen Color</div><div class="a tx" style="left:70px;top:3.5px;font-size:3px;color:#4d8fe0;">Edit</div><div class="a" style="left:9.2px;top:18.2px;width:5.6px;height:5.6px;border-radius:50%;background:#111"></div><div class="a" style="left:22.2px;top:18.2px;width:5.6px;height:5.6px;border-radius:50%;background:#555"></div><div class="a" style="left:35.2px;top:18.2px;width:5.6px;height:5.6px;border-radius:50%;background:#888"></div><div class="a" style="left:48.2px;top:18.2px;width:5.6px;height:5.6px;border-radius:50%;background:#bbb"></div><div class="a" style="left:61.2px;top:18.2px;width:5.6px;height:5.6px;border-radius:50%;background:#fff"></div><div class="a" style="left:9.2px;top:31.2px;width:5.6px;height:5.6px;border-radius:50%;background:#c03030"></div><div class="a" style="left:22.2px;top:31.2px;width:5.6px;height:5.6px;border-radius:50%;background:#e06040"></div><div class="a" style="left:35.2px;top:31.2px;width:5.6px;height:5.6px;border-radius:50%;background:#d09030"></div><div class="a" style="left:48.2px;top:31.2px;width:5.6px;height:5.6px;border-radius:50%;background:#40a040"></div><div class="a" style="left:61.2px;top:31.2px;width:5.6px;height:5.6px;border-radius:50%;background:#3070d0"></div><div class="a" style="left:12px;top:48px;width:26.8px;height:5.5px;border-radius:1.5px;background:#555"></div></div><svg class="a" width="10" height="5" style="left:155.2px;top:27.700000000000003px"><path d="M0,3.5 L5,0 L10,3.5 Z" fill="#2c2c2e"/></svg></div></div><div id="foot" class="a"><div id="ins" class="a">Insert from...</div></div></div></body></html>
